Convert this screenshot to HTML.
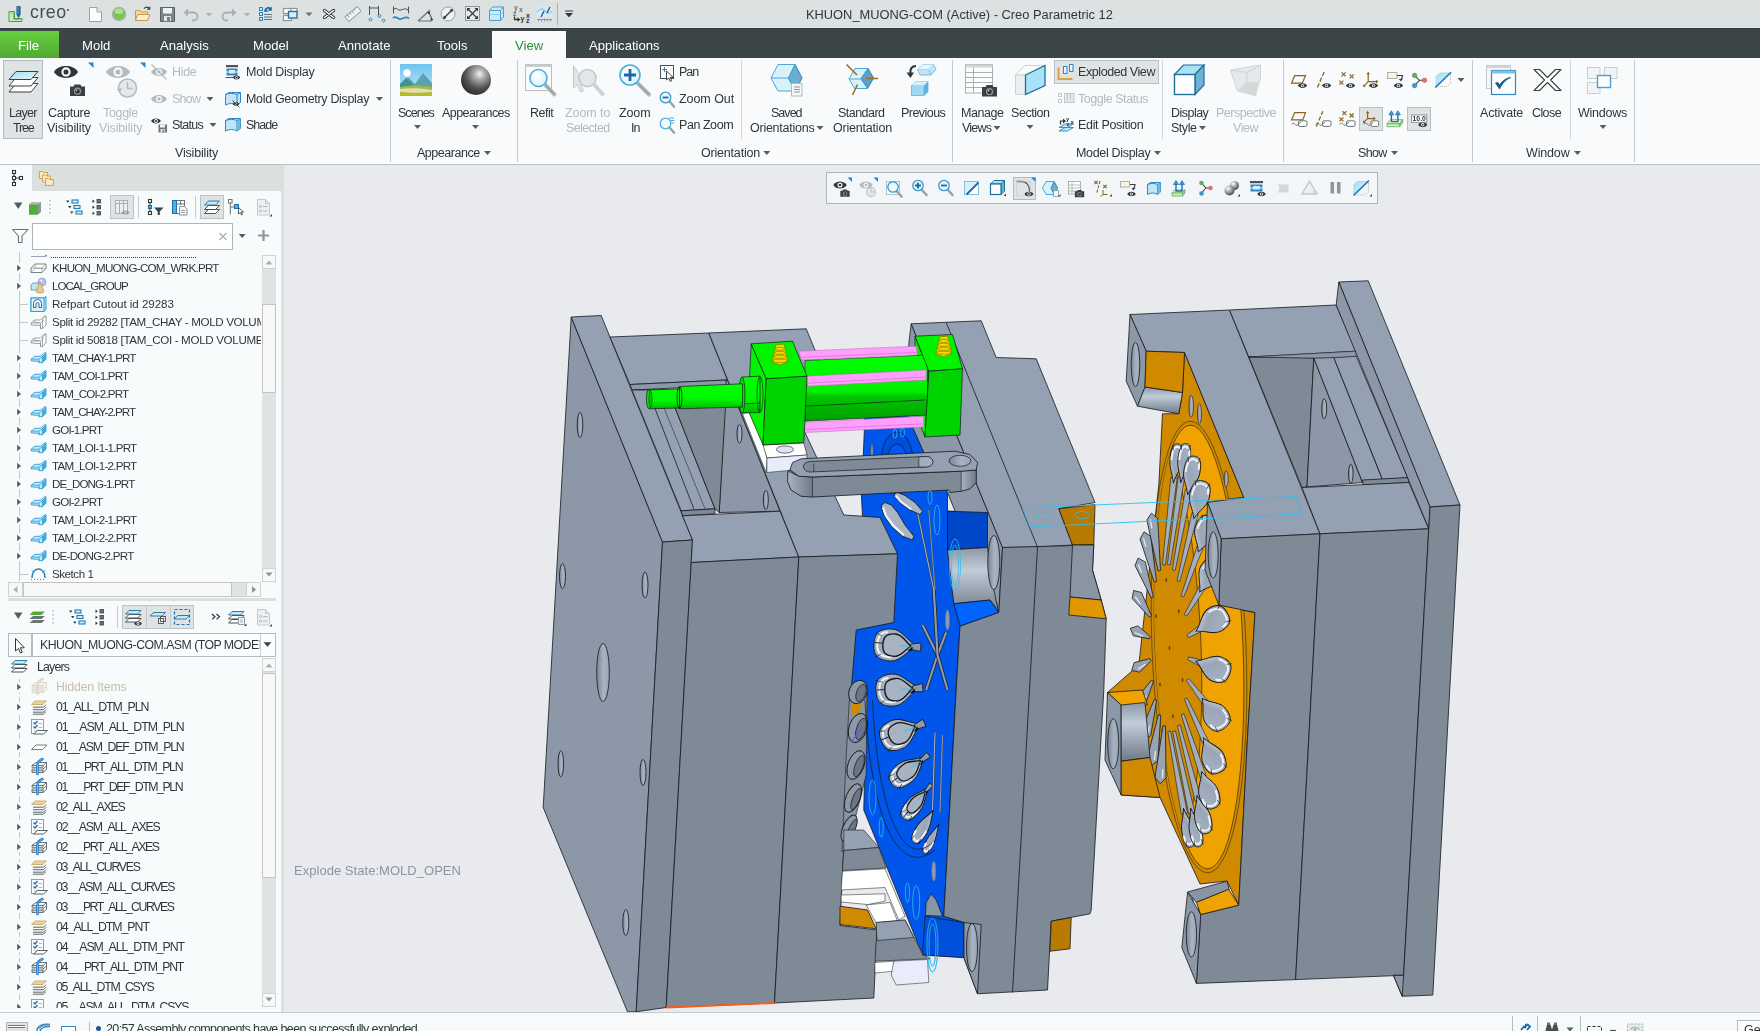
<!DOCTYPE html>
<html><head><meta charset="utf-8"><title>Creo</title>
<style>
*{box-sizing:border-box}
html,body{margin:0;padding:0}
body{width:1760px;height:1031px;overflow:hidden;position:relative;background:#e9eaee;font-family:"Liberation Sans",sans-serif;font-size:12px;color:#2f3638}
.abs{position:absolute}
#title{position:absolute;left:0;top:0;width:1760px;height:28px;background:#dce2e1;border-bottom:1px solid #e5e9e9}
#tabs{position:absolute;left:0;top:28px;width:1760px;height:30px;background:#3c4547;border-top:1px solid #2f383a}
#ribbon{position:absolute;left:0;top:58px;width:1760px;height:107px;background:#f9fafb;border-bottom:1px solid #b5c0c2;box-shadow:inset 0 -1px 0 #ffffff}
#left{position:absolute;left:0;top:165px;width:284px;height:847px;background:#f7fbfc}
#view{position:absolute;left:284px;top:165px;width:1476px;height:847px;background:#e9eaee}
#status{position:absolute;left:0;top:1012px;width:1760px;height:19px;background:#f6fafb;border-top:1px solid #c3cdd0}
.t{position:absolute;white-space:pre;line-height:1;will-change:transform}
.tb{top:39px;font-size:13.1px;color:#fff}
svg{position:absolute;overflow:visible}
</style></head>
<body>
<div id="title"></div>
<div id="tabs"></div>
<div id="ribbon"></div>
<div id="left"></div>
<div id="view"></div>
<div id="status"></div>
<svg class="abs" style="left:0;top:0" width="600" height="28" viewBox="0 0 600 28">
 <!-- creo logo -->
 <g>
  <path d="M9 11.5h5.5v7h7.5v3H9z" fill="#c9ecc0" stroke="#4f9a45" stroke-width="1"/>
  <path d="M10.5 13h3v6.5h7" fill="none" stroke="#7fc474" stroke-width="1"/>
  <path d="M16.8 6.5h3.4v8l-1.7 3-1.7-3z" fill="#1b67a8" stroke="#0f4a80" stroke-width=".6"/>
  <path d="M18 7v7" stroke="#6db3e6" stroke-width=".8"/>
 </g>
 <!-- new doc -->
 <path d="M89.5 7.5h7.5l4.5 4.5v9.5h-12z" fill="#fdfdfd" stroke="#9aa3a6"/>
 <path d="M97 7.5v4.5h4.5" fill="#e8ecee" stroke="#9aa3a6"/>
 <!-- green ball -->
 <circle cx="119" cy="14" r="6.6" fill="#7ec355" stroke="#a9b2b0" stroke-width="1.2"/>
 <ellipse cx="119" cy="11.2" rx="4.2" ry="2.6" fill="#b8e59a" opacity=".85"/>
 <!-- open folder -->
 <path d="M135.5 10.5h4l1.5 1.5h6.5v8.5h-12z" fill="#f2d9a3" stroke="#c99a45"/>
 <path d="M135.5 20.5l2.2-6h12.3l-2.5 6z" fill="#fbedc8" stroke="#c99a45"/>
 <path d="M144 8.5c1.5-1.5 3.5-1.6 5-.4" fill="none" stroke="#3a4142" stroke-width="1.3"/><path d="M150.3 6.2v3.6h-3.6z" fill="#3a4142"/>
 <!-- save -->
 <path d="M160.5 7.5h14v14h-14z" fill="#7d8689" stroke="#5a6265"/>
 <rect x="163" y="8" width="9" height="5.5" fill="#eef1f2"/>
 <rect x="163.5" y="15.5" width="8" height="6" fill="#dfe4e6" stroke="#5a6265" stroke-width=".6"/>
 <rect x="167" y="17" width="3" height="4.5" fill="#5d89b8"/>
 <!-- undo -->
 <path d="M187 12.5h6.5a4 4 0 0 1 0 8h-1.5" fill="none" stroke="#a8b0b2" stroke-width="1.8"/><path d="M183.5 12.5l4.5-4v8z" fill="#a8b0b2"/>
 <path d="M205.5 13h7l-3.5 3.5z" fill="#aeb6b8"/>
 <!-- redo -->
 <path d="M233 12.5h-6.5a4 4 0 0 0 0 8h1.5" fill="none" stroke="#a8b0b2" stroke-width="1.8"/><path d="M236.5 12.5l-4.5-4v8z" fill="#a8b0b2"/>
 <path d="M243.500 13h7l-3.5 3.500z" fill="#aeb6b8"/>
 <!-- regenerate -->
 <g fill="none" stroke="#2f87c4" stroke-width="1"><rect x="259.500" y="7.500" width="3" height="3"/><rect x="259.500" y="12.500" width="3" height="3"/><rect x="259.500" y="17.500" width="3" height="3"/></g>
 <path d="M264 14.500h8M264 17h8M264 19.500h8" stroke="#6b7375" stroke-width="1"/>
 <path d="M265 10.500c1-2.500 3.500-3.200 5.500-2" fill="none" stroke="#1b67a8" stroke-width="1.600"/><path d="M271.800 6.500v4.200h-4.200z" fill="#1b67a8"/>
 <path d="M265.500 8.500l2.800 3.200h-4.500z" fill="#1b67a8"/>
 <!-- windows -->
 <g fill="#fff" stroke="#8d9699" stroke-width="1.200"><rect x="283.500" y="8.500" width="8" height="5"/><rect x="283.500" y="15.500" width="8" height="5"/><rect x="291" y="8.500" width="6" height="4"/></g>
 <rect x="288.500" y="11.500" width="8.500" height="6.500" fill="#d9edf8" stroke="#2c6d9c" stroke-width="1.400"/>
 <path d="M305.500 12.500h7l-3.500 3.700z" fill="#6b7375"/>
 <!-- close -->
 <path d="M324.500 10.500l9 7M333.500 10.500l-9 7" stroke="#2f3638" stroke-width="3.400" stroke-linecap="round"/><path d="M324.500 10.500l9 7M333.500 10.500l-9 7" stroke="#fff" stroke-width="1.500" stroke-linecap="round"/>
 <!-- ruler -->
 <g transform="rotate(-40 353 14)"><rect x="345" y="11" width="16" height="6" fill="#f2f4f5" stroke="#9aa3a6"/><path d="M348 11v3M351 11v2M354 11v3M357 11v2" stroke="#4e8fc0" stroke-width=".9"/></g>
 <!-- dim -->
 <path d="M369.500 6v9M378.500 6v9M369.500 8h9" stroke="#4a5153" stroke-width="1" fill="none"/><circle cx="370.500" cy="19.500" r="1.400" fill="none" stroke="#2f87c4"/><circle cx="379.500" cy="16" r="1.400" fill="none" stroke="#2f87c4"/><circle cx="383.500" cy="20.500" r="1.400" fill="none" stroke="#2f87c4"/>
 <!-- wave -->
 <path d="M393.500 6.500v7M408.500 6.500v7M394 9c3-2 4 2 7 1s4-2 7 0" stroke="#4a5153" fill="none"/><path d="M393 18c3-3 5 2 8 1s5-3 8-.5" stroke="#2f87c4" stroke-width="1.800" fill="none"/>
 <!-- angle -->
 <path d="M418 21h14M418 21l12-11" stroke="#6b7375" stroke-width="1.200" fill="none"/><path d="M428.500 12.500c1.800 2 2.800 4.500 3 7" stroke="#2f3638" fill="none"/><path d="M426.800 12l3.500-.3-.8 3zM430 20.500l3.200-.2-1.500-2.800z" fill="#2f3638"/>
 <!-- circle arrow -->
 <circle cx="448" cy="14" r="7" fill="#eef1f2" stroke="#9aa3a6"/><path d="M444 18l8-8" stroke="#2f3638" stroke-width="1.200"/><path d="M443 19l.8-3.500 2.700 2.700zM453 9l-.8 3.500-2.700-2.700z" fill="#2f3638"/>
 <!-- expand -->
 <rect x="465.500" y="6.500" width="14" height="14" fill="#e6eaeb" stroke="#8d9699"/><path d="M468 9l9 9M477 9l-9 9" stroke="#2f3638" stroke-width="1.100"/><path d="M467 8h3.500l-3.500 3.500zM478 8h-3.500l3.500 3.500zM467 19h3.500l-3.500-3.500zM478 19h-3.500l3.500-3.500z" fill="#2f3638"/>
 <!-- box -->
 <path d="M489.500 10.500l3-3.500h11v10l-3 3.500h-11z" fill="#cfeaf7" stroke="#4b9fd0"/><path d="M489.500 10.500h11v10M500.500 10.500l3-3.500" fill="none" stroke="#4b9fd0"/><path d="M489.500 14.500h11l3-3" fill="none" stroke="#7fbfe2" stroke-width=".8"/>
 <!-- xyz -->
 <g font-family="Liberation Sans" font-size="6.500" font-weight="bold" fill="#6b7375"><text x="514" y="10">y</text><text x="519" y="11.500">x</text><text x="513" y="15.500" >z</text></g>
 <g font-family="Liberation Sans" font-size="7" font-weight="bold" fill="#2f3638"><text x="520.500" y="21">y</text><text x="526" y="17.500">x</text><text x="526" y="22.500">z</text></g>
 <path d="M514.500 16.500v3h4" stroke="#2f3638" stroke-width="1.300" fill="none"/><path d="M517.500 17.300l3 2.200-3 2.200z" fill="#2f3638"/>
 <!-- graph -->
 <rect x="537" y="7" width="15" height="10" fill="#d5ecf7"/><path d="M537 12c3-4 6-4 8-1s5 3 7 0" stroke="#8ec8e6" fill="none" stroke-width="1.200"/><path d="M541 17l3-6M547 13l3-6" stroke="#1b67a8" stroke-width="1.500"/><path d="M537 19.500h15M538.500 19.500v2M541.500 19.500v2M544.500 19.500v2M547.500 19.500v2M550.500 19.500v2" stroke="#7d8689" stroke-width=".8"/>
 <!-- sep -->
 <path d="M557.500 3v22" stroke="#a8b2b4"/>
 <path d="M565 10.500h8v1h-8z" fill="#2f3638"/><path d="M565 13h8l-4 4.200z" fill="#2f3638"/>
</svg>
<div class="t" style="left:30px;top:3.800px;font-size:17.800px;color:#454d4f;letter-spacing:.5px">creo</div><div class="abs" style="left:67px;top:9px;width:2px;height:2px;border-radius:1px;background:#454d4f"></div>
<div class="t" style="left:806px;top:9px;font-size:12.85px;color:#2f3638">KHUON_MUONG-COM (Active) - Creo Parametric 12</div>

<div class="abs" style="left:0;top:31px;width:59px;height:27px;background:linear-gradient(to bottom,#66d040 0%,#5cbc3a 50%,#4fa834 100%)"></div>
<div class="abs" style="left:492px;top:31px;width:74px;height:27px;background:#f9fafb"></div>
<div class="t tb" style="left:18px;color:#fff">File</div>
<div class="t tb" style="left:82px">Mold</div>
<div class="t tb" style="left:160px">Analysis</div>
<div class="t tb" style="left:253px">Model</div>
<div class="t tb" style="left:338px">Annotate</div>
<div class="t tb" style="left:437px">Tools</div>
<div class="t tb" style="left:515px;color:#2f8a3d">View</div>
<div class="t tb" style="left:589px">Applications</div>

<div class="abs" style="left:3px;top:60px;width:40px;height:79px;background:#dfe3e4;border:1px solid #b3babc"></div>
<div class="abs" style="left:1054px;top:60px;width:105px;height:24px;background:#dfe3e4;border:1px solid #b9c0c2"></div>
<div class="abs" style="left:1359px;top:107px;width:24px;height:24px;background:#dfe3e4;border:1px solid #b9c0c2"></div>
<div class="abs" style="left:1407px;top:107px;width:24px;height:24px;background:#dfe3e4;border:1px solid #b9c0c2"></div>
<div class="abs" style="left:390px;top:60px;width:1px;height:102px;background:#c3cacc"></div>
<div class="abs" style="left:517px;top:60px;width:1px;height:102px;background:#c3cacc"></div>
<div class="abs" style="left:952px;top:60px;width:1px;height:102px;background:#c3cacc"></div>
<div class="abs" style="left:1283px;top:60px;width:1px;height:102px;background:#c3cacc"></div>
<div class="abs" style="left:1472px;top:60px;width:1px;height:102px;background:#c3cacc"></div>
<div class="abs" style="left:1634px;top:60px;width:1px;height:102px;background:#c3cacc"></div>
<div class="abs" style="left:741px;top:60px;width:1px;height:79px;background:#cfd5d7"></div>
<div class="abs" style="left:1162px;top:60px;width:1px;height:79px;background:#cfd5d7"></div>
<div class="abs" style="left:1570px;top:60px;width:1px;height:79px;background:#cfd5d7"></div>
<div class="t" style="left:9.3px;top:106.7px;font-size:12.5px;letter-spacing:-0.714px;">Layer</div>

<div class="t" style="left:13.0px;top:121.6px;font-size:12.5px;letter-spacing:-1.160px;">Tree</div>

<div class="t" style="left:48.2px;top:106.7px;font-size:12.5px;letter-spacing:-0.353px;">Capture</div>

<div class="t" style="left:47.0px;top:121.6px;font-size:12.5px;letter-spacing:-0.092px;">Visibility</div>

<div class="t" style="left:103.4px;top:106.7px;font-size:12.5px;letter-spacing:-0.339px;color:#b3babc;">Toggle</div>

<div class="t" style="left:99.3px;top:121.6px;font-size:12.5px;letter-spacing:-0.152px;color:#b3babc;">Visibility</div>

<div class="t" style="left:171.6px;top:65.9px;font-size:12.5px;letter-spacing:-0.327px;color:#b3babc;">Hide</div>

<div class="t" style="left:171.6px;top:92.7px;font-size:12.5px;letter-spacing:-0.717px;color:#b3babc;">Show</div>

<div class="t" style="left:171.6px;top:118.7px;font-size:12.5px;letter-spacing:-0.723px;">Status</div>

<div class="t" style="left:245.5px;top:65.9px;font-size:12.5px;letter-spacing:-0.254px;">Mold Display</div>

<div class="t" style="left:245.5px;top:92.7px;font-size:12.5px;letter-spacing:-0.324px;">Mold Geometry Display</div>

<div class="t" style="left:245.5px;top:118.7px;font-size:12.5px;letter-spacing:-0.969px;">Shade</div>

<div class="t" style="left:174.5px;top:146.7px;font-size:12.5px;letter-spacing:-0.172px;">Visibility</div>

<div class="t" style="left:398.0px;top:106.7px;font-size:12.5px;letter-spacing:-0.966px;">Scenes</div>

<div class="t" style="left:442.3px;top:106.7px;font-size:12.5px;letter-spacing:-0.542px;">Appearances</div>

<div class="t" style="left:417.3px;top:146.7px;font-size:12.5px;letter-spacing:-0.471px;">Appearance</div>

<div class="t" style="left:529.5px;top:106.7px;font-size:12.5px;letter-spacing:-0.500px;">Refit</div>

<div class="t" style="left:565.2px;top:106.7px;font-size:12.5px;letter-spacing:-0.079px;color:#b3babc;">Zoom to</div>

<div class="t" style="left:566.0px;top:121.6px;font-size:12.5px;letter-spacing:-0.643px;color:#b3babc;">Selected</div>

<div class="t" style="left:619.0px;top:106.7px;font-size:12.5px;letter-spacing:-0.113px;">Zoom</div>

<div class="t" style="left:630.5px;top:121.6px;font-size:12.5px;letter-spacing:-0.962px;">In</div>

<div class="t" style="left:679.3px;top:65.9px;font-size:12.5px;letter-spacing:-0.980px;">Pan</div>

<div class="t" style="left:678.9px;top:92.7px;font-size:12.5px;letter-spacing:-0.059px;">Zoom Out</div>

<div class="t" style="left:679.3px;top:118.7px;font-size:12.5px;letter-spacing:-0.446px;">Pan Zoom</div>

<div class="t" style="left:700.5px;top:146.7px;font-size:12.5px;letter-spacing:-0.195px;">Orientation</div>

<div class="t" style="left:771.0px;top:106.7px;font-size:12.5px;letter-spacing:-0.969px;">Saved</div>

<div class="t" style="left:749.5px;top:121.6px;font-size:12.5px;letter-spacing:-0.250px;">Orientations</div>

<div class="t" style="left:838.0px;top:106.7px;font-size:12.5px;letter-spacing:-0.529px;">Standard</div>

<div class="t" style="left:832.5px;top:121.6px;font-size:12.5px;letter-spacing:-0.204px;">Orientation</div>

<div class="t" style="left:900.5px;top:106.7px;font-size:12.5px;letter-spacing:-0.542px;">Previous</div>

<div class="t" style="left:960.5px;top:106.7px;font-size:12.5px;letter-spacing:-0.445px;">Manage</div>

<div class="t" style="left:961.6px;top:121.6px;font-size:12.5px;letter-spacing:-0.804px;">Views</div>

<div class="t" style="left:1011.0px;top:106.7px;font-size:12.5px;letter-spacing:-0.456px;">Section</div>

<div class="t" style="left:1078.0px;top:65.9px;font-size:12.5px;letter-spacing:-0.420px;">Exploded View</div>

<div class="t" style="left:1078.0px;top:92.7px;font-size:12.5px;letter-spacing:-0.442px;color:#b3babc;">Toggle Status</div>

<div class="t" style="left:1078.0px;top:118.7px;font-size:12.5px;letter-spacing:-0.314px;">Edit Position</div>

<div class="t" style="left:1170.7px;top:106.7px;font-size:12.5px;letter-spacing:-0.526px;">Display</div>

<div class="t" style="left:1171.4px;top:121.6px;font-size:12.5px;letter-spacing:-0.478px;">Style</div>

<div class="t" style="left:1216.4px;top:106.7px;font-size:12.5px;letter-spacing:-0.483px;color:#b3babc;">Perspective</div>

<div class="t" style="left:1233.0px;top:121.6px;font-size:12.5px;letter-spacing:-0.467px;color:#b3babc;">View</div>

<div class="t" style="left:1075.7px;top:146.7px;font-size:12.5px;letter-spacing:-0.323px;">Model Display</div>

<div class="t" style="left:1358.0px;top:146.7px;font-size:12.5px;letter-spacing:-0.667px;">Show</div>

<div class="t" style="left:1480.0px;top:106.7px;font-size:12.5px;letter-spacing:-0.183px;">Activate</div>

<div class="t" style="left:1532.0px;top:106.7px;font-size:12.5px;letter-spacing:-0.592px;">Close</div>

<div class="t" style="left:1578.0px;top:106.7px;font-size:12.5px;letter-spacing:-0.244px;">Windows</div>

<div class="t" style="left:1526.0px;top:146.7px;font-size:12.5px;letter-spacing:-0.160px;">Window</div>
<svg style="left:0;top:0" width="1760" height="170" viewBox="0 0 1760 170">
<defs>
<linearGradient id="gcy" x1="0" y1="0" x2="1" y2="1"><stop offset="0" stop-color="#9fdcf5"/><stop offset="1" stop-color="#eaf8fd"/></linearGradient>
<radialGradient id="gsph" cx=".62" cy=".3" r=".75"><stop offset="0" stop-color="#f2f2f2"/><stop offset=".25" stop-color="#a9a9a9"/><stop offset=".65" stop-color="#4f4f4f"/><stop offset="1" stop-color="#2b2b2b"/></radialGradient>
<linearGradient id="gsky" x1="0" y1="0" x2="0" y2="1"><stop offset="0" stop-color="#6fc3ee"/><stop offset="1" stop-color="#c8e9f8"/></linearGradient>
<radialGradient id="glens" cx=".4" cy=".35" r=".8"><stop offset="0" stop-color="#ffffff"/><stop offset="1" stop-color="#d4eefa"/></radialGradient>
<g id="eye"><path d="M-8 0C-5-5.300 5-5.300 8 0C5 5.300-5 5.300-8 0z"/><circle r="3.100" fill="#f9fafb"/><circle r="1.700"/></g>
<g id="seye"><path d="M-4.600 0C-2.800-3.200 2.800-3.200 4.600 0C2.800 3.200-2.800 3.200-4.600 0z" fill="#2f3638"/><circle r="1.700" fill="#f9fafb"/><circle r=".9" fill="#2f3638"/></g>
<g id="cam"><path d="M-7.500-3.500h3.500l1.200-2h5.600l1.200 2h3.500v9.500h-15z" fill="#3a3f41"/><circle cy="1.200" r="3.600" fill="#8d9699"/><circle cy="1.200" r="2.300" fill="#2a2e30"/><circle cx="-.8" cy=".4" r=".8" fill="#c9d0d2"/></g>
</defs>
<path d="M206.5 97.0h7l-3.5 4z" fill="#555d5f"/>
<path d="M209.5 123.0h7l-3.5 4z" fill="#555d5f"/>
<path d="M376.0 97.0h7l-3.5 4z" fill="#555d5f"/>
<path d="M414.0 125.0h7l-3.5 4z" fill="#555d5f"/>
<path d="M472.0 125.0h7l-3.5 4z" fill="#555d5f"/>
<path d="M484.0 151.0h7l-3.5 4z" fill="#555d5f"/>
<path d="M763.3 151.0h7l-3.5 4z" fill="#555d5f"/>
<path d="M816.5 126.0h7l-3.5 4z" fill="#555d5f"/>
<path d="M993.5 126.0h7l-3.5 4z" fill="#555d5f"/>
<path d="M1026.5 125.0h7l-3.5 4z" fill="#555d5f"/>
<path d="M1199.0 126.0h7l-3.5 4z" fill="#555d5f"/>
<path d="M1154.0 151.0h7l-3.5 4z" fill="#555d5f"/>
<path d="M1391.0 151.0h7l-3.5 4z" fill="#555d5f"/>
<path d="M1457.5 78.0h7l-3.5 4z" fill="#555d5f"/>
<path d="M1599.5 125.0h7l-3.5 4z" fill="#555d5f"/>
<path d="M1574.0 151.0h7l-3.5 4z" fill="#555d5f"/>
<path d="M9 92l7-8.500h22l-7 8.500z" fill="#fff" stroke="#3a4143" stroke-width="1"/>
<path d="M9 86l7-8.500h22l-7 8.500z" fill="#fff" stroke="#3a4143" stroke-width="1"/>
<path d="M9 79.500l7-8h22l-7 8z" fill="url(#gcy)" stroke="#3a4143" stroke-width="1"/>
<g transform="translate(66,72) scale(1.5,1.500)" fill="#2f3638"><use href="#eye"/></g>
<g transform="translate(77.5,90)"><use href="#cam"/></g>
<path d="M88 62.500h5.500v5.500z" fill="#1e88d8"/>
<g transform="translate(118,72) scale(1.5,1.500)" fill="#b4bbbd"><use href="#eye"/></g>
<circle cx="127.500" cy="88" r="9" fill="#e4e8e9" stroke="#b4bbbd" stroke-width="1.500"/><path d="M127.500 82v6.500h5" stroke="#b4bbbd" stroke-width="1.400" fill="none"/><path d="M116.500 89l3.500 3.500 2-4.500z" fill="#b4bbbd"/>
<path d="M140 62.500h5.500v5.500z" fill="#1e88d8"/>
<g transform="translate(159,72)" fill="#b4bbbd"><use href="#eye"/></g><path d="M151.500 64.500l15 15" stroke="#b4bbbd" stroke-width="1.200"/>
<g transform="translate(159,99)" fill="#b4bbbd"><use href="#eye"/></g>
<g transform="translate(156,121) scale(.62)" fill="#2f3638"><use href="#eye"/></g>
<path d="M158.500 124.500h8.500v8h-8.500z" fill="#6e777a"/><rect x="160" y="124.500" width="5" height="3" fill="#f1f4f5"/><rect x="160.500" y="129" width="4.500" height="3.500" fill="#dfe4e6"/><rect x="162.500" y="129.800" width="1.600" height="2.700" fill="#4e7fb5"/>
<rect x="226" y="65" width="12" height="2.200" fill="#4a5254"/><rect x="226.500" y="68.500" width="11" height="3" fill="#2f87c4"/><rect x="226.500" y="72.500" width="11" height="3" fill="#2f87c4"/><rect x="229" y="70" width="6" height="3.500" fill="#d7edf9"/><path d="M225.500 77.500h8" stroke="#4a5254"/>
<g transform="translate(236.500,77.500) scale(.8)"><use href="#seye"/></g>
<path d="M225.500 94.500l3.500-2h11.500v10l-3.500 2.500c-3.500-2-7.500-2-11.500 0z" fill="#bfe5f7" stroke="#2f87c4" stroke-width="1"/><path d="M225.500 94.500c4-1.500 8-1.500 11.500 0v10.500M237 94.500l3.500-2" fill="none" stroke="#2f87c4"/>
<g transform="translate(236,104) scale(.75)"><use href="#seye"/></g><path d="M232.500 100.500l7 7" stroke="#2f3638" stroke-width=".9"/>
<path d="M225.500 120.500l3.500-2h11.500v10l-3.500 2.500c-3.500-2-7.500-2-11.500 0z" fill="#bfe5f7" stroke="#2f87c4" stroke-width="1"/><path d="M225.500 120.500c4-1.500 8-1.500 11.500 0v10.500M237 120.500l3.500-2" fill="none" stroke="#2f87c4"/><path d="M237 120.700l3.400-2v9.700l-3.400 2.300z" fill="#6fb9e0"/>
<rect x="400" y="64" width="32" height="32" fill="url(#gsky)"/><circle cx="407" cy="73" r="3.800" fill="#fff" opacity=".95"/><path d="M400 86l8-9 7 7 8-11 9 10v6h-32z" fill="#5ba3aa"/><path d="M400 84l6-6 6 6 5 5h-17z" fill="#3f8f95"/><path d="M400 87c10-2 22-2 32 0v9h-32z" fill="#9fb84a"/><path d="M400 89c10-1.500 22-1 32 1v2c-10 2-22 2-32 0z" fill="#e3dfb5"/><path d="M400 92c10 1 22 1 32 0v4h-32z" fill="#b9b92c"/>
<circle cx="476" cy="80" r="15" fill="url(#gsph)"/>
<rect x="525.500" y="64.500" width="26" height="26" fill="#fbfcfc" stroke="#b7bec0"/><rect x="525.500" y="64.500" width="26" height="2.500" fill="#c9cfd1"/>
<path d="M545.500 85l9 9.500" stroke="#b9bfc1" stroke-width="4" stroke-linecap="round"/><path d="M545.500 85l9 9.500" stroke="#8f989b" stroke-width="1.200"/><circle cx="538.500" cy="78" r="8.500" fill="url(#glens)" stroke="#4ab0dc" stroke-width="1.600"/>
<path d="M573.500 66v22l4-3.500 3 7.500 3-1-3-7.500h5.500z" fill="#e3e6e7" stroke="#c3c9cb"/>
<path d="M594.500 85l8 9" stroke="#cdd2d4" stroke-width="4" stroke-linecap="round"/><circle cx="587.500" cy="78" r="8.500" fill="#e4e7e8" stroke="#c3c9cb" stroke-width="1.600"/>
<path d="M638 83.500l11 11" stroke="#b9bfc1" stroke-width="4.200" stroke-linecap="round"/><path d="M638 83.500l11 11" stroke="#8f989b" stroke-width="1.200"/><circle cx="630" cy="75" r="10" fill="url(#glens)" stroke="#4ab0dc" stroke-width="1.600"/><path d="M624 75h12M630 69v12" stroke="#1b67a8" stroke-width="2.800"/>
<rect x="660.500" y="65.500" width="13" height="13" fill="#fdfdfd" stroke="#4a5254"/><path d="M664.500 67v5M662 69.500h5" stroke="#2f87c4" stroke-width="1.100"/><path d="M666.500 71v9l2.200-2 1.500 3.500 1.500-.7-1.500-3.400h3z" fill="#fff" stroke="#2f3638" stroke-width=".9"/>
<path d="M669.500 101.500l4.500 5" stroke="#9aa3a6" stroke-width="2.600" stroke-linecap="round"/><circle cx="665.500" cy="97.500" r="5.300" fill="#eef8fd" stroke="#2f9bd0" stroke-width="1.300"/><path d="M662.500 97.500h6" stroke="#1b67a8" stroke-width="1.800"/>
<path d="M669.500 127.500l4.500 5" stroke="#9aa3a6" stroke-width="2.600" stroke-linecap="round"/><circle cx="665.500" cy="123.500" r="5.300" fill="#eef8fd" stroke="#4ab0dc" stroke-width="1.300"/><path d="M669 118h5M670.500 120.500h4M671 123h3" stroke="#4ab0dc" stroke-width="1"/>
<path d="M771 78l7-13.500h17l7 13.500-7 13h-17z" fill="#d8f1fb" stroke="#4aa8d8" stroke-width="1"/><path d="M795 64.500l7 13.500-7 13-6.500-13z" fill="#6aaed0" stroke="#3d8fc0"/><path d="M771 78h17.500l6.500-13.500M788.500 78l6.500 13" fill="none" stroke="#4aa8d8"/>
<rect x="791.500" y="83.500" width="10.500" height="12.500" fill="#f4f6f7" stroke="#b3babc"/><path d="M794 87h6M794 89.500h6M794 92h6" stroke="#8d9699" stroke-width="1"/>
<path d="M849 79l6-10.500h13l5.500 9.500-6 10.500h-13z" fill="#d8f1fb" stroke="#4aa8d8"/><path d="M861 78.500l7-10 5.500 9.500-6 10.500z" fill="#5f9fc0" stroke="#3d8fc0"/><path d="M849 79h12l7-10.500M861 79l6.500 9.500" fill="none" stroke="#4aa8d8"/>
<path d="M846.500 64.500l10.500 10.500M866 78.500h12M857.500 84.500l-5 10.500" stroke="#9a6a1e" stroke-width="1.500"/>
<path d="M917.500 69.500l5-5h11l2.500 5-5 5.500h-11z" fill="#bfe5f7" stroke="#6fc0e8"/><path d="M917.500 69.500h11l5-5M928.500 69.500l2.500 5.500" stroke="#6fc0e8" fill="none"/><path d="M917.500 69.500l5-5h11l-5 5z" fill="#e6f6fd"/>
<path d="M911.500 85.500l4-4h12.500v10l-4 4h-12.500z" fill="#9fd8f3" stroke="#6fc0e8"/><path d="M911.500 85.500h12.500v10M924 85.500l4-4" stroke="#6fc0e8" fill="none"/><path d="M911.500 85.500l4-4h12.500l-4 4z" fill="#d8f1fb"/><path d="M924 85.500l4-4v10l-4 4z" fill="#5fb0dc"/>
<path d="M916 66c-4 0-6.500 3-5.500 7.500" fill="none" stroke="#2f3638" stroke-width="2.200"/><path d="M906.500 72.500h7.500l-3.500 5.500z" fill="#2f3638"/>
<rect x="965.500" y="64.500" width="27" height="28.500" fill="#fcfdfd" stroke="#a8b0b2"/><rect x="965.500" y="64.500" width="27" height="3" fill="#d0d5d7"/><path d="M965.500 72.500h27M965.500 77.500h27M965.500 82.500h27M965.500 87.500h27M973.500 67.500v25.500" stroke="#a8b0b2" stroke-width="1"/>
<g transform="translate(989.500,90.500)"><use href="#cam"/></g>
<path d="M1015.500 75l9-9.500h20.500l-19.500 9.500z" fill="#fbfcfc" stroke="#c3c9cb" stroke-width=".8"/><path d="M1015.500 75h10v19.500h-10z" fill="#eceeef" stroke="#c3c9cb" stroke-width=".8"/><path d="M1025.500 75l19.500-9.500v20l-19.500 9z" fill="#a8e2f7" stroke="#1f6f9c" stroke-width="1.300"/>
<path d="M1058.500 67.500v11.500h14" fill="none" stroke="#d9a33a" stroke-width="2"/><rect x="1063.500" y="66.500" width="3.500" height="7" fill="#eaf6fc" stroke="#2f87c4"/><rect x="1069.500" y="64.500" width="3.500" height="7" fill="#eaf6fc" stroke="#2f87c4"/>
<g fill="none" stroke="#c3c9cb" stroke-width="1"><rect x="1058.500" y="93.500" width="3" height="3"/><rect x="1058.500" y="99.500" width="3" height="3"/></g><rect x="1064.500" y="93.500" width="9.500" height="9" fill="#e4e8e9" stroke="#c3c9cb"/><path d="M1067.500 93.500v7M1070.500 93.500v7" stroke="#c3c9cb"/>
<path d="M1059 131l6-3.500h8.500l-6 3.500z" fill="#bfe5f7" stroke="#2f87c4" stroke-width=".9"/><path d="M1059 127.500l6-3.500h8.500l-6 3.500z" fill="#bfe5f7" stroke="#2f87c4" stroke-width=".9"/><path d="M1060.500 124.500v-3.500h3.500" fill="none" stroke="#2f3638" stroke-width="1.200"/><path d="M1063 118.500l3 2.500-3 2.500z" fill="#2f3638"/>
<g font-family="Liberation Sans" font-size="6" font-weight="bold" fill="#2f3638"><text x="1066" y="121">y</text><text x="1070.500" y="123.500">x</text><text x="1066.500" y="126">z</text></g>
<path d="M1174.500 74.500l9-9.500h20.500l-9 9.500z" fill="#a8e2f7" stroke="#1f6f9c" stroke-width="1.200"/><path d="M1195 74.500l9-9.500v20l-9 9.500z" fill="#6fb2d2" stroke="#1f6f9c" stroke-width="1.200"/><rect x="1174.500" y="74.500" width="20.500" height="20" fill="#fff" stroke="#1f6f9c" stroke-width="1.400"/>
<path d="M1230.500 70l7 21 18 4.500 5-18v-12.500z" fill="#e6e8e9" stroke="#d0d4d6"/><path d="M1230.500 70l17 2.500 13-7.500M1247.500 72.500l-3 20" fill="none" stroke="#d0d4d6"/><path d="M1238 90l9-8h12l-4 13.500z" fill="#d5d8d9"/>
<rect x="1486.500" y="65.500" width="24" height="23" fill="#f4f6f7" stroke="#c3c9cb"/><rect x="1486.500" y="65.500" width="24" height="2.500" fill="#d0d5d7"/><rect x="1491.500" y="70.500" width="24" height="24" fill="#fbfcfc" stroke="#2f87c4" stroke-width="1.200"/><rect x="1491.500" y="70.500" width="24" height="3" fill="#7fc0e6"/><path d="M1495.500 83l4 6c3-6 6-9 11-11.500-4 .5-8 3-11 7.500l-1.500-2.500z" fill="#155a8a" stroke="#155a8a" stroke-width=".8" stroke-linejoin="round"/>
<path d="M1534 69.500h5.500l8 8 8-8h5.500l-10.500 10.500 10.500 10.500h-5.500l-8-8-8 8h-5.500l10.500-10.500z" fill="#fff" stroke="#3a4143" stroke-width="1.100" stroke-linejoin="round"/>
<g fill="#f1f3f4" stroke="#c9cfd1" stroke-width="1"><rect x="1587.500" y="67.500" width="12.500" height="11"/><rect x="1587.500" y="82.500" width="12.500" height="11"/><rect x="1604.500" y="67.500" width="12.500" height="11"/></g><rect x="1597.500" y="75.500" width="13" height="12" fill="#fafdfe" stroke="#4f9fd0" stroke-width="1.400"/>
<path d="M1291.500 83.200l3.200-7.500h10.800l-3.200 7.500z" fill="none" stroke="#8a6420" stroke-width="1.200"/><g transform="translate(1302.5,85.6) scale(1.0)"><use href="#seye"/></g>
<path d="M1317.400 87.500l6.700-15.400" stroke="#8a6420" stroke-width="1.300" stroke-dasharray="4.500 1.800" fill="none"/><g transform="translate(1326.6,85.6) scale(1.0)"><use href="#seye"/></g>
<path d="M1341.6 72.4l4 4M1345.6 72.4l-4 4" stroke="#8a6420" stroke-width="1.200" fill="none"/><path d="M1349.6 74.4l4 4M1353.6 74.4l-4 4" stroke="#8a6420" stroke-width="1.200" fill="none"/><path d="M1339.4 80.7l4 4M1343.4 80.7l-4 4" stroke="#8a6420" stroke-width="1.200" fill="none"/><g transform="translate(1350.5,85.6) scale(1.0)"><use href="#seye"/></g>
<path d="M1368.200 73v8.600h8.500M1368.200 81.600l-4.500 4.800" stroke="#8a6420" stroke-width="1.200" fill="none"/><path d="M1366.400 74.200l1.800-2.400 1.800 2.400zM1376 79.800l2.400 1.800-2.400 1.800zM1363 87.200l.6-3 2.200 2z" fill="#8a6420"/><g transform="translate(1373.5,85.6) scale(1.0)"><use href="#seye"/></g>
<rect x="1387.500" y="72.500" width="9.400" height="6" fill="#fdf3d9" stroke="#a8b0b2"/><path d="M1397 75.500h5.500l-1.200 4.500" fill="none" stroke="#3a4143" stroke-width="1.100"/><path d="M1398.800 79l4.200-.4-2 3z" fill="#3a4143"/><g transform="translate(1398.4,85.6) scale(1.0)"><use href="#seye"/></g>
<path d="M1414.600 75.400l4.800 4.900h5M1419.400 80.300l-4.800 5.300" stroke="#3a4143" stroke-width="1.100" fill="none"/><circle cx="1414.600" cy="75.400" r="2.300" fill="#6aa86a" stroke="#4f8f4f" stroke-width=".5"/><circle cx="1424.500" cy="80.300" r="2.300" fill="#e07070" stroke="#c05050" stroke-width=".5"/><circle cx="1414.600" cy="85.600" r="2.300" fill="#4a94c4" stroke="#2f78a8" stroke-width=".5"/>
<path d="M1436.200 76.200l3.800-3.200h10.800l-14.600 13.600z" fill="url(#gcy)" stroke="#8ecbe8" stroke-width=".6"/><path d="M1450.500 74.500v9l-3.500 3h-9" fill="none" stroke="#a8b0b2" stroke-width="1" stroke-dasharray="1 1.200"/><path d="M1435.300 87.500l15.700-15.300" stroke="#1f6fb0" stroke-width="1.500"/>
<path d="M1291.500 119.900l3.200-7.300h10.800l-2.700 7.300z" fill="none" stroke="#8a6420" stroke-width="1.200"/><rect x="1298.5" y="120.8" width="8.4" height="5.6" rx="1.200" fill="#fff" stroke="#6b7375" stroke-width="1"/><path d="M1291.5 124.3c1.500-1.500 2.500-1.500 3.500 0s2.500 1.500 4-0.500l2-2" fill="none" stroke="#6b7375" stroke-width="1"/>
<path d="M1316.300 126.400l6.500-15.100" stroke="#8a6420" stroke-width="1.300" stroke-dasharray="4.500 1.800" fill="none"/><rect x="1322.6" y="120.8" width="8.3" height="5.6" rx="1.200" fill="#fff" stroke="#6b7375" stroke-width="1"/><path d="M1315.6 124.3c1.500-1.500 2.500-1.500 3.500 0s2.500 1.500 4-0.500l2-2" fill="none" stroke="#6b7375" stroke-width="1"/>
<path d="M1342.4 111.1l4 4M1346.4 111.1l-4 4" stroke="#8a6420" stroke-width="1.200" fill="none"/><path d="M1349.6 113.5l4 4M1353.6 113.5l-4 4" stroke="#8a6420" stroke-width="1.200" fill="none"/><path d="M1339.4 117.4l4 4M1343.4 117.4l-4 4" stroke="#8a6420" stroke-width="1.200" fill="none"/><rect x="1346.6" y="120.8" width="8.4" height="5.6" rx="1.200" fill="#fff" stroke="#6b7375" stroke-width="1"/><path d="M1339.6 124.3c1.500-1.500 2.500-1.500 3.500 0s2.500 1.500 4-0.500l2-2" fill="none" stroke="#6b7375" stroke-width="1"/>
<path d="M1367.600 112v6.600h6.500M1367.600 118.600l-4 3.800" stroke="#8a6420" stroke-width="1.200" fill="none"/><path d="M1365.800 113.200l1.800-2.400 1.800 2.400zM1373.400 116.800l2.400 1.800-2.400 1.800zM1362.800 123.200l.6-3 2.200 2z" fill="#8a6420"/><rect x="1370.9" y="120.8" width="7.8" height="5.6" rx="1.200" fill="#fff" stroke="#6b7375" stroke-width="1"/><path d="M1363.9 124.3c1.500-1.500 2.500-1.500 3.500 0s2.500 1.500 4-0.500l2-2" fill="none" stroke="#6b7375" stroke-width="1"/>
<path d="M1387 123.700l3.200-4h12.500l-3 4z" fill="#e2f8dc" stroke="#5fb04f" stroke-width=".8"/><path d="M1387 123.700h12.700v3h-12.700z" fill="#c8f0c0" stroke="#5fb04f" stroke-width=".8"/><path d="M1399.700 123.700l3-4v3l-3 4z" fill="#9ed890" stroke="#5fb04f" stroke-width=".8"/><path d="M1391.400 114v7.600h6.500v-7.600" fill="none" stroke="#1f6fb0" stroke-width="1.400"/><path d="M1388.900 114.800l2.500-4 2.500 4zM1395.400 114.800l2.500-4 2.500 4z" fill="#2f9bdc" stroke="#1f6fb0" stroke-width=".7"/>
<rect x="1411.600" y="114.900" width="15.100" height="7.500" fill="#fff" stroke="#8d9699" stroke-width="1"/><text x="1412.600" y="121.300" font-family="Liberation Sans" font-size="6.800" font-weight="bold" fill="#2f3638" textLength="13.200" lengthAdjust="spacingAndGlyphs">10.0</text><g transform="translate(1422.7,124.8) scale(1.0)"><use href="#seye"/></g>
</svg>
<div class="abs" style="left:32px;top:165px;width:252px;height:26px;background:#dbe0df"></div>
<div class="abs" style="left:281px;top:191px;width:3px;height:821px;background:#dae0e0"></div>
<div class="abs" style="left:110px;top:195px;width:24px;height:24px;background:#dfe3e4;border:1px solid #bcc3c5"></div>
<div class="abs" style="left:200px;top:195px;width:24px;height:24px;background:#dfe3e4;border:1px solid #bcc3c5"></div>
<div class="abs" style="left:138px;top:196px;width:1px;height:22px;background:#c3cacc"></div>
<div class="abs" style="left:195px;top:196px;width:1px;height:22px;background:#c3cacc"></div>
<div class="abs" style="left:32px;top:223px;width:201px;height:27px;background:#fff;border:1px solid #aab6b9"></div>
<div class="abs" style="left:0;top:252px;width:261px;height:329px;overflow:hidden"><div class="abs" style="left:0;top:-252px">
<div class="t" style="left:52.4px;top:262.4px;font-size:11.6px;letter-spacing:-0.724px;">KHUON_MUONG-COM_WRK.PRT</div>

<div class="t" style="left:52.4px;top:280.4px;font-size:11.6px;letter-spacing:-1.021px;">LOCAL_GROUP</div>

<div class="t" style="left:52.4px;top:298.4px;font-size:11.6px;letter-spacing:-0.055px;">Refpart Cutout id 29283</div>

<div class="t" style="left:52.4px;top:316.4px;font-size:11.6px;letter-spacing:-0.336px;">Split id 29282 [TAM_CHAY - MOLD VOLUME_1]</div>

<div class="t" style="left:52.4px;top:334.4px;font-size:11.6px;letter-spacing:-0.329px;">Split id 50818 [TAM_COI - MOLD VOLUME_2]</div>

<div class="t" style="left:52.4px;top:352.4px;font-size:11.6px;letter-spacing:-0.958px;">TAM_CHAY-1.PRT</div>

<div class="t" style="left:52.4px;top:370.4px;font-size:11.6px;letter-spacing:-0.833px;">TAM_COI-1.PRT</div>

<div class="t" style="left:52.4px;top:388.4px;font-size:11.6px;letter-spacing:-0.833px;">TAM_COI-2.PRT</div>

<div class="t" style="left:52.4px;top:406.4px;font-size:11.6px;letter-spacing:-0.979px;">TAM_CHAY-2.PRT</div>

<div class="t" style="left:52.4px;top:424.4px;font-size:11.6px;letter-spacing:-0.822px;">GOI-1.PRT</div>

<div class="t" style="left:52.4px;top:442.4px;font-size:11.6px;letter-spacing:-0.741px;">TAM_LOI-1-1.PRT</div>

<div class="t" style="left:52.4px;top:460.4px;font-size:11.6px;letter-spacing:-0.741px;">TAM_LOI-1-2.PRT</div>

<div class="t" style="left:52.4px;top:478.4px;font-size:11.6px;letter-spacing:-0.884px;">DE_DONG-1.PRT</div>

<div class="t" style="left:52.4px;top:496.4px;font-size:11.6px;letter-spacing:-0.822px;">GOI-2.PRT</div>

<div class="t" style="left:52.4px;top:514.4px;font-size:11.6px;letter-spacing:-0.741px;">TAM_LOI-2-1.PRT</div>

<div class="t" style="left:52.4px;top:532.4px;font-size:11.6px;letter-spacing:-0.741px;">TAM_LOI-2-2.PRT</div>

<div class="t" style="left:52.4px;top:550.4px;font-size:11.6px;letter-spacing:-0.754px;">DE-DONG-2.PRT</div>

<div class="t" style="left:52.4px;top:568.4px;font-size:11.6px;letter-spacing:-0.467px;">Sketch 1</div>

</div></div>
<div class="abs" style="left:262px;top:255px;width:14px;height:327px;background:#e1e2e4"></div><div class="abs" style="left:262px;top:255px;width:14px;height:14px;background:#f8f8f9;border:1px solid #d0d2d4"></div><div class="abs" style="left:262px;top:568px;width:14px;height:14px;background:#f8f8f9;border:1px solid #d0d2d4"></div><div class="abs" style="left:262px;top:304px;width:14px;height:89px;background:#f8f8f9;border:1px solid #c3c4c6"></div>
<div class="abs" style="left:8px;top:582px;width:252px;height:15px;background:#e1e2e4;border:1px solid #c9d0d2"></div>
<div class="abs" style="left:8px;top:582px;width:15px;height:15px;background:#f8f8f9;border:1px solid #d0d2d4"></div>
<div class="abs" style="left:246px;top:582px;width:15px;height:15px;background:#f8f8f9;border:1px solid #d0d2d4"></div>
<div class="abs" style="left:23px;top:582px;width:209px;height:15px;background:#f8f8f9;border:1px solid #c3c4c6"></div>
<div class="abs" style="left:8px;top:598px;width:268px;height:3px;background:#dbe1e1"></div>
<div class="abs" style="left:122px;top:605px;width:72px;height:24px;background:#dfe3e4;border:1px solid #bcc3c5"></div>
<div class="abs" style="left:146px;top:605px;width:1px;height:24px;background:#c3cacc"></div><div class="abs" style="left:170px;top:605px;width:1px;height:24px;background:#c3cacc"></div>
<div class="abs" style="left:117px;top:606px;width:1px;height:22px;background:#c3cacc"></div>
<div class="abs" style="left:8px;top:633px;width:24px;height:24px;background:#f7f9fa;border:1px solid #b3bcbe"></div>
<div class="abs" style="left:32px;top:633px;width:244px;height:24px;background:#fbfcfd;border:1px solid #b3bcbe;overflow:hidden"><div class="t" style="left:7.4px;top:5.0px;font-size:12.3px;letter-spacing:-0.526px;">KHUON_MUONG-COM.ASM (TOP MODEL</div>
<div class="abs" style="left:227px;top:0;width:16px;height:22px;background:#fbfcfd;border-left:1px solid #c9d0d2"></div></div>
<div class="t" style="left:36.6px;top:660.9px;font-size:12.3px;letter-spacing:-0.803px;">Layers</div>

<div class="abs" style="left:0;top:676px;width:261px;height:332px;overflow:hidden"><div class="abs" style="left:0;top:-676px">
<div class="t" style="left:56.3px;top:680.9px;font-size:12.3px;letter-spacing:-0.156px;color:#c9bfa8;">Hidden Items</div>

<div class="t" style="left:56.3px;top:700.9px;font-size:12.3px;letter-spacing:-1.011px;">01_ALL_DTM_PLN</div>

<div class="t" style="left:56.3px;top:720.9px;font-size:12.3px;letter-spacing:-1.021px;">01__ASM_ALL_DTM_PLN</div>

<div class="t" style="left:56.3px;top:740.9px;font-size:12.3px;letter-spacing:-1.164px;">01__ASM_DEF_DTM_PLN</div>

<div class="t" style="left:56.3px;top:760.9px;font-size:12.3px;letter-spacing:-1.263px;">01___PRT_ALL_DTM_PLN</div>

<div class="t" style="left:56.3px;top:780.9px;font-size:12.3px;letter-spacing:-1.399px;">01___PRT_DEF_DTM_PLN</div>

<div class="t" style="left:56.3px;top:800.9px;font-size:12.3px;letter-spacing:-1.242px;">02_ALL_AXES</div>

<div class="t" style="left:56.3px;top:820.9px;font-size:12.3px;letter-spacing:-1.181px;">02__ASM_ALL_AXES</div>

<div class="t" style="left:56.3px;top:840.9px;font-size:12.3px;letter-spacing:-1.433px;">02___PRT_ALL_AXES</div>

<div class="t" style="left:56.3px;top:860.9px;font-size:12.3px;letter-spacing:-1.284px;">03_ALL_CURVES</div>

<div class="t" style="left:56.3px;top:880.9px;font-size:12.3px;letter-spacing:-1.240px;">03__ASM_ALL_CURVES</div>

<div class="t" style="left:56.3px;top:900.9px;font-size:12.3px;letter-spacing:-1.462px;">03___PRT_ALL_CURVES</div>

<div class="t" style="left:56.3px;top:920.9px;font-size:12.3px;letter-spacing:-1.031px;">04_ALL_DTM_PNT</div>

<div class="t" style="left:56.3px;top:940.9px;font-size:12.3px;letter-spacing:-1.035px;">04__ASM_ALL_DTM_PNT</div>

<div class="t" style="left:56.3px;top:960.9px;font-size:12.3px;letter-spacing:-1.257px;">04___PRT_ALL_DTM_PNT</div>

<div class="t" style="left:56.3px;top:980.9px;font-size:12.3px;letter-spacing:-1.248px;">05_ALL_DTM_CSYS</div>

<div class="t" style="left:56.3px;top:1000.9px;font-size:12.3px;letter-spacing:-1.218px;">05__ASM_ALL_DTM_CSYS</div>

</div></div>
<div class="abs" style="left:262px;top:658px;width:14px;height:349px;background:#e1e2e4"></div><div class="abs" style="left:262px;top:658px;width:14px;height:14px;background:#f8f8f9;border:1px solid #d0d2d4"></div><div class="abs" style="left:262px;top:993px;width:14px;height:14px;background:#f8f8f9;border:1px solid #d0d2d4"></div><div class="abs" style="left:262px;top:673px;width:14px;height:205px;background:#f8f8f9;border:1px solid #c3c4c6"></div>
<svg style="left:0;top:0" width="284" height="1031" viewBox="0 0 284 1031">
<defs>
<g id="iprt"><path d="M-7.300 1.200l3.700-2.900h5.300l4.600-3.500h1.200v6.400l-3.500 3.500h-3.500v-1.400l-7.800-.4z" fill="#c5ecfa" stroke="#2f9bd0" stroke-width=".9" stroke-linejoin="round"/><path d="M-7.300 1.200h7.800v3.500M.5 1.200l4-3M4 4.700v-6l3.500-3.500" fill="none" stroke="#2f9bd0" stroke-width=".8"/><path d="M4 -1.300l3.500-3.500v6l-3.500 3.500z" fill="#4aa8d8"/></g>
<g id="isplit"><path d="M-7.300 1l3.500-3h5.500l4.500-4h1.300v9l-3.500 3.500h-2v-3l-9.300-.5z" fill="#fff" stroke="#8d9699" stroke-width=".9" stroke-linejoin="round"/><path d="M-7.300 1h9.300v5.500M2 1l3.500-3M-3.800-2v2.500h5M4 6.500v-9.500l3.500-3" fill="none" stroke="#8d9699" stroke-width=".8"/></g>
<g id="iwrk"><path d="M-7.500 4.500v-4.500l4-4h11v4.500l-4 4z" fill="#fff" stroke="#6b7375" stroke-width=".9" stroke-linejoin="round"/><path d="M-7.500 0h11v4.500M3.500 0l4-4M-3.500-4v4.500l-4 4M-3.500 .500h11" fill="none" stroke="#8d9699" stroke-width=".7"/></g>
<g id="igrp"><path d="M-7.500 -1l2-2h7v5.500l-2 1.500h-7z" fill="#bfe5f7" stroke="#2f9bd0" stroke-width=".8"/><circle cx="3.500" cy="-4" r="4" fill="#b9bff0" stroke="#8088d0" stroke-width=".6"/><circle cx="2.500" cy="-5" r="1.500" fill="#e8eaff"/><path d="M-2.500 5.500l4-10 4 10c-2 2-6 2-8 0z" fill="#e9c98c" stroke="#b98f45" stroke-width=".7"/></g>
<g id="iref"><path d="M-7.500-6h13l2-1.500v13l-2 2h-13z" fill="#bfe8f8" stroke="#2f9bd0" stroke-width="1"/><rect x="-7.500" y="-6" width="13" height="13.500" fill="#d8f2fc" stroke="#2f9bd0" stroke-width="1"/><path d="M-5 3.500v-4a4 4 0 0 1 8 0v4h-2.500v-3.500a1.500 1.500 0 0 0-3 0v3.500z" fill="#fff" stroke="#155a8a" stroke-width=".9"/></g>
<g id="isk"><path d="M-6.500 4c0-7 4-9 6.500-9s6.500 2 6.500 9" fill="none" stroke="#1f7fc0" stroke-width="1.400"/><path d="M-7.500 5.500h15" stroke="#6b7375" stroke-width="1" stroke-dasharray="1 2"/><path d="M-6.500-3.500l2 2M6.500-3.500l-2 2" stroke="#1f7fc0" stroke-width="1"/></g>
<g id="lall"><path d="M-7.500-2.500l3.500-3.500h11.500l-3.500 3.500z" fill="#f0d29a" stroke="#c9a45a" stroke-width=".8"/><path d="M-6 .2h10.500l2.500-2.500M-6 2.700h10.500l2.500-2.500M-6 5.200h10.500l2.500-2.500M-6 7.200h10.500l2.500-2.500" fill="none" stroke="#4a5254" stroke-width=".9"/></g>
<g id="lasm"><rect x="-7.500" y="-7.500" width="12" height="14" fill="#fcfcfc" stroke="#8d9699" stroke-width=".9"/><path d="M-5.500-4.500l1.500 1.500 2.500-3M-5.500-.5l1.500 1.500 2.500-3" fill="none" stroke="#1f6fb0" stroke-width="1.300"/><path d="M-.5-3.500h3.500M-.5.500h3.500" stroke="#a8b0b2" stroke-width=".9"/><path d="M-5 3l1.500 1.500 2-2" fill="none" stroke="#a8b0b2" stroke-width=".9"/><path d="M-5.500 7l4-3.500h10l-4 3.500z" fill="#fff" stroke="#4a5254" stroke-width=".9"/></g>
<g id="ldef"><path d="M-7.500 2.500l4.500-4.500h11l-4.500 4.500z" fill="#fff" stroke="#6b7375" stroke-width=".9"/></g>
<g id="lprt"><path d="M-7 -1.500l4-3h10.500l-3.500 3zM-7 -1.500v1.800h11v-1.800M-7 2h11l3.500-3M-7 2v1.800h11V2M-7 5.500h11l3.500-3M4 5.500V3.800M-7 3.800v1.700M7.500-4.500v7" fill="#fff" stroke="#4a5254" stroke-width=".8" stroke-linejoin="round"/><path d="M-1.500 7v-9.500c0-2 3-4.500 5-5.500" fill="none" stroke="#1f7fd0" stroke-width="2.600" stroke-linecap="round"/><path d="M-1.500 7v-9.500c0-2 3-4.500 5-5.500" fill="none" stroke="#6fc0f0" stroke-width=".9" stroke-linecap="round"/></g>
<g id="lhid" opacity=".55"><path d="M-7 -1.500l4-3h10.500l-3.500 3zM-7 -1.500v1.800h11v-1.800M-7 2h11l3.500-3M-7 2v1.800h11V2M-7 5.500h11l3.500-3M4 5.500V3.800M-7 3.800v1.700M7.500-4.500v7" fill="#f6f1e4" stroke="#b5a98c" stroke-width=".8" stroke-linejoin="round"/><path d="M-1.500 7v-9.500c0-2 3-4.500 5-5.500" fill="none" stroke="#c9c2b0" stroke-width="2.600" stroke-linecap="round"/></g>
<g id="exp"><path d="M-1.800-3.300v6.600l3.800-3.300z" fill="#555d5f"/></g>
</defs>
<g fill="#fff" stroke="#2f3638" stroke-width="1.100"><rect x="12.500" y="170.500" width="3" height="3"/><rect x="12.500" y="176.500" width="3" height="3"/><rect x="12.500" y="182.500" width="3" height="3"/><rect x="19.500" y="176.500" width="3" height="3"/></g><path d="M14 173.500v3M14 179.500v3M15.500 178h4" stroke="#2f3638" stroke-width="1.100"/>
<g fill="#fbe9c0" stroke="#c99a45" stroke-width=".9"><path d="M39.500 171.500h3l1 1h4v6h-8z"/><path d="M42.500 175h3l1 1h4v6h-8z"/><path d="M45.500 178.500h3l1 1h4v6h-8z"/></g>
<path d="M14 202.500h8.500l-4.250 6.500z" fill="#555d5f"/>
<path d="M29 204.500l3-2.500h9v10l-3 2.500h-9z" fill="#8d9699"/><rect x="29" y="204.500" width="9" height="10" fill="#4db030"/><path d="M29 204.500l3-2.500h9l-3 2.500z" fill="#b3babc"/>
<path d="M50 200v14" stroke="#b3babc" stroke-width="1.500" stroke-dasharray="1.500 2.500"/>
<g fill="#d8f0fb" stroke="#1f7fb8" stroke-width="1.100"><rect x="72" y="200" width="6" height="3"/><rect x="74" y="205.5" width="6" height="3"/><rect x="76" y="211" width="6" height="3"/></g><path d="M66 200.5h3.500l-1.750 2.300zM68 206h3.500l-1.750 2.300zM70 211.5h3.500l-1.750 2.300z" fill="#2f3638"/>
<g fill="#6b7375" stroke="#3a4143" stroke-width=".8"><rect x="97" y="199.5" width="3.500" height="3.500"/><rect x="97" y="205.5" width="3.500" height="3.500"/><rect x="97" y="211.5" width="3.500" height="3.500"/></g><path d="M92.5 199.5v3.500l2.300-1.750zM92.5 205.5v3.500l2.300-1.750zM92.5 211.5v3.500l2.300-1.750z" fill="#2f3638"/>
<rect x="115.500" y="200.500" width="12" height="13" fill="#eceeef" stroke="#a8b0b2"/><path d="M115.500 203.500h12M119.500 200.500v13M123.500 200.500v13" stroke="#a8b0b2"/><g transform="translate(125.500,212.500) scale(.85)" ><path d="M-4.600 0C-2.800-3.200 2.800-3.200 4.600 0C2.800 3.200-2.800 3.200-4.600 0z" fill="#8d9699"/><circle r="1.600" fill="#eceeef"/><circle r=".8" fill="#8d9699"/></g>
<g fill="#fff" stroke="#2f3638" stroke-width="1.100"><rect x="148.500" y="199.500" width="3" height="3"/><rect x="148.500" y="211.500" width="3" height="3"/></g><rect x="148.500" y="205.500" width="3" height="3" fill="#4ab0e8" stroke="#1f6fb0" stroke-width="1.100"/><path d="M150 202.500v3M150 208.500v3" stroke="#2f3638"/><path d="M154 207.500h9.500l-3.700 4v3.500h-2.100v-3.500z" fill="#3a4143"/>
<rect x="172.500" y="200.500" width="12" height="13" fill="#fff" stroke="#6b7375"/><rect x="172.500" y="200.500" width="4" height="13" fill="#4ab0e8" stroke="#1f6fb0"/><path d="M176.500 204h8M180.500 200.500v4" stroke="#6b7375"/><path d="M179.500 206.500h5l2.500 2.500v6h-7.500z" fill="#f4f6f7" stroke="#8d9699"/><path d="M181 210.500h4M181 212.500h4" stroke="#8d9699" stroke-width=".8"/>
<path d="M204.500 213.500l4-4h11l-4 4z" fill="#fff" stroke="#3a4143" stroke-width=".9"/><path d="M204.500 209.500l4-4h11l-4 4z" fill="#fff" stroke="#3a4143" stroke-width=".9"/><path d="M204.500 205l4-4h11l-4 4z" fill="url(#gcy)" stroke="#1f6f9c" stroke-width=".9"/>
<rect x="228.500" y="199.500" width="3.500" height="3.500" fill="#fff" stroke="#6b7375"/><path d="M230.300 203v11.500M230.300 207h5" stroke="#6b7375"/><rect x="234.500" y="204.500" width="4" height="4" fill="#4ab0e8" stroke="#1f6fb0"/><path d="M238.500 207.500v6.500l1.800-1.500 1.200 2.500 1-.5-1.200-2.400h2.300z" fill="#fff" stroke="#2f3638" stroke-width=".8"/>
<path d="M257.5 199.5h8l4 4v11.500h-12z" fill="#eef1f2" stroke="#c3c9cb"/><path d="M265.5 199.5v4h4" fill="#dde2e4" stroke="#c3c9cb"/><circle cx="260.5" cy="206.5" r="1.100" fill="none" stroke="#a8b0b2" stroke-width=".8"/><circle cx="260.5" cy="211" r="1.100" fill="none" stroke="#a8b0b2" stroke-width=".8"/><path d="M263.0 206.5h4.500M263.0 211h4.500" stroke="#a8b0b2" stroke-width=".9"/><path d="M272.0 214v2.500h-2.500z" fill="#3a4143"/>
<path d="M12.500 229.500h15.500l-6 6.500v6.500h-3.500v-6.500z" fill="#fbfcfc" stroke="#6b7375" stroke-width="1.100" stroke-linejoin="round"/>
<path d="M219.500 233l7 7M226.500 233l-7 7" stroke="#a8b0b2" stroke-width="1.200"/>
<path d="M238.7 234.0h7l-3.5 4z" fill="#555d5f"/>
<path d="M258 235.500h11M263.500 230v11" stroke="#8d9699" stroke-width="2.200"/>
<g clip-path="url(#cliptree)">
<path d="M19.500 252v330" stroke="#c3c9cb" stroke-width="1"/>
<path d="M31 256.500h15" stroke="#a8a0b8" stroke-width="1"/><path d="M45 255l2 1" stroke="#7a50b0" stroke-width="1"/><path d="M51 257.500h145" stroke="#3a4143" stroke-width="1" stroke-dasharray="1 1"/>
<rect x="16" y="263" width="7" height="10" fill="#f7fbfc"/><use href="#exp" x="19" y="268"/>
<use href="#iwrk" x="38.500" y="268"/>
<rect x="16" y="281" width="7" height="10" fill="#f7fbfc"/><use href="#exp" x="19" y="286"/>
<use href="#igrp" x="38.500" y="286"/>
<path d="M19.500 304.5h8.500" stroke="#c3c9cb"/>
<use href="#iref" x="38.500" y="304"/>
<path d="M19.500 322.5h8.500" stroke="#c3c9cb"/>
<use href="#isplit" x="38.500" y="322"/>
<path d="M19.500 340.5h8.500" stroke="#c3c9cb"/>
<use href="#isplit" x="38.500" y="340"/>
<rect x="16" y="353" width="7" height="10" fill="#f7fbfc"/><use href="#exp" x="19" y="358"/>
<use href="#iprt" x="38.500" y="358"/>
<rect x="16" y="371" width="7" height="10" fill="#f7fbfc"/><use href="#exp" x="19" y="376"/>
<use href="#iprt" x="38.500" y="376"/>
<rect x="16" y="389" width="7" height="10" fill="#f7fbfc"/><use href="#exp" x="19" y="394"/>
<use href="#iprt" x="38.500" y="394"/>
<rect x="16" y="407" width="7" height="10" fill="#f7fbfc"/><use href="#exp" x="19" y="412"/>
<use href="#iprt" x="38.500" y="412"/>
<rect x="16" y="425" width="7" height="10" fill="#f7fbfc"/><use href="#exp" x="19" y="430"/>
<use href="#iprt" x="38.500" y="430"/>
<rect x="16" y="443" width="7" height="10" fill="#f7fbfc"/><use href="#exp" x="19" y="448"/>
<use href="#iprt" x="38.500" y="448"/>
<rect x="16" y="461" width="7" height="10" fill="#f7fbfc"/><use href="#exp" x="19" y="466"/>
<use href="#iprt" x="38.500" y="466"/>
<rect x="16" y="479" width="7" height="10" fill="#f7fbfc"/><use href="#exp" x="19" y="484"/>
<use href="#iprt" x="38.500" y="484"/>
<rect x="16" y="497" width="7" height="10" fill="#f7fbfc"/><use href="#exp" x="19" y="502"/>
<use href="#iprt" x="38.500" y="502"/>
<rect x="16" y="515" width="7" height="10" fill="#f7fbfc"/><use href="#exp" x="19" y="520"/>
<use href="#iprt" x="38.500" y="520"/>
<rect x="16" y="533" width="7" height="10" fill="#f7fbfc"/><use href="#exp" x="19" y="538"/>
<use href="#iprt" x="38.500" y="538"/>
<rect x="16" y="551" width="7" height="10" fill="#f7fbfc"/><use href="#exp" x="19" y="556"/>
<use href="#iprt" x="38.500" y="556"/>
<path d="M19.500 574.5h8.500" stroke="#c3c9cb"/>
<use href="#isk" x="38.500" y="574"/>
</g>
<path d="M14 612.500h8.500l-4.250 6.500z" fill="#555d5f"/>
<path d="M29.500 623l3.500-3h12l-3.500 3z" fill="#6b7375"/><path d="M29.500 619l3.500-3h12l-3.500 3z" fill="#6b7375"/><path d="M29.500 615l3.500-3.500h12l-3.500 3.500z" fill="#4db030"/>
<path d="M53 610v14" stroke="#b3babc" stroke-width="1.500" stroke-dasharray="1.500 2.500"/>
<g fill="#d8f0fb" stroke="#1f7fb8" stroke-width="1.100"><rect x="75" y="610" width="6" height="3"/><rect x="77" y="615.5" width="6" height="3"/><rect x="79" y="621" width="6" height="3"/></g><path d="M69 610.5h3.500l-1.750 2.300zM71 616h3.500l-1.750 2.300zM73 621.5h3.500l-1.750 2.300z" fill="#2f3638"/>
<g fill="#6b7375" stroke="#3a4143" stroke-width=".8"><rect x="100" y="609.5" width="3.500" height="3.500"/><rect x="100" y="615.5" width="3.500" height="3.500"/><rect x="100" y="621.5" width="3.500" height="3.500"/></g><path d="M95.5 609.5v3.500l2.300-1.750zM95.5 615.5v3.500l2.300-1.750zM95.5 621.5v3.500l2.300-1.750z" fill="#2f3638"/>
<path d="M125.5 622l3.500-3.500h12l-3.500 3.500z" fill="#fff" stroke="#3a4143" stroke-width=".9"/><path d="M125.5 618l3.500-3.500h12l-3.500 3.500z" fill="#fff" stroke="#3a4143" stroke-width=".9"/><path d="M125.5 614l3.500-3.500h12l-3.500 3.500z" fill="url(#gcy)" stroke="#1f6f9c" stroke-width=".9"/><g transform="translate(138,623.500) scale(.85)"><use href="#seye"/></g>
<path d="M150.0 616l3.500-3.500h12l-3.500 3.500z" fill="url(#gcy)" stroke="#1f6f9c" stroke-width=".9"/><rect x="158.500" y="618.500" width="5" height="5" fill="#eceeef" stroke="#4a5254" stroke-width=".9"/><rect x="160.500" y="616.500" width="5" height="5" fill="none" stroke="#4a5254" stroke-width=".9"/>
<rect x="174.500" y="609.500" width="15" height="15" fill="none" stroke="#1f6fb0" stroke-width="1.200" stroke-dasharray="3 2"/><path d="M174.0 619l3.500-3.500h12l-3.500 3.500z" fill="url(#gcy)" stroke="#1f6f9c" stroke-width=".9"/>
<path d="M212 614l3 2.700-3 2.700M216.500 614l3 2.700-3 2.700" fill="none" stroke="#2f3638" stroke-width="1.200"/>
<path d="M228.5 623l3.500-3.500h12l-3.500 3.500z" fill="#fff" stroke="#3a4143" stroke-width=".9"/><path d="M228.5 619l3.500-3.500h12l-3.500 3.500z" fill="#fff" stroke="#3a4143" stroke-width=".9"/><path d="M228.5 615l3.500-3.500h12l-3.500 3.500z" fill="url(#gcy)" stroke="#1f6f9c" stroke-width=".9"/><rect x="238.500" y="617.500" width="6" height="7" fill="#f4f6f7" stroke="#8d9699" stroke-width=".9"/><path d="M240 620h3M240 622h3" stroke="#8d9699" stroke-width=".7"/><path d="M246.500 623.500v2.500h-2.500z" fill="#3a4143"/>
<path d="M257.5 609.5h8l4 4v11.500h-12z" fill="#eef1f2" stroke="#c3c9cb"/><path d="M265.5 609.5v4h4" fill="#dde2e4" stroke="#c3c9cb"/><circle cx="260.5" cy="616.5" r="1.100" fill="none" stroke="#a8b0b2" stroke-width=".8"/><circle cx="260.5" cy="621" r="1.100" fill="none" stroke="#a8b0b2" stroke-width=".8"/><path d="M263.0 616.5h4.500M263.0 621h4.500" stroke="#a8b0b2" stroke-width=".9"/><path d="M272.0 624v2.500h-2.500z" fill="#3a4143"/>
<path d="M15.500 638.500v12.500l3-2.500 2 4.500 1.800-.8-2-4.400h4z" fill="#fff" stroke="#2f3638" stroke-width="1"/>
<path d="M11.5 672l3.500-3.500h12l-3.500 3.500z" fill="#fff" stroke="#3a4143" stroke-width=".9"/><path d="M11.5 668l3.500-3.500h12l-3.500 3.500z" fill="#fff" stroke="#3a4143" stroke-width=".9"/><path d="M11.5 664l3.500-3.500h12l-3.500 3.500z" fill="url(#gcy)" stroke="#1f6f9c" stroke-width=".9"/>
<path d="M19.500 679v329" stroke="#c3c9cb" stroke-width="1" stroke-dasharray="6 3"/>
<rect x="16" y="682" width="7" height="10" fill="#f7fbfc"/><use href="#exp" x="19" y="687"/><use href="#lhid" x="39" y="687"/>
<rect x="16" y="702" width="7" height="10" fill="#f7fbfc"/><use href="#exp" x="19" y="707"/><use href="#lall" x="39" y="707"/>
<rect x="16" y="722" width="7" height="10" fill="#f7fbfc"/><use href="#exp" x="19" y="727"/><use href="#lasm" x="39" y="727"/>
<rect x="16" y="742" width="7" height="10" fill="#f7fbfc"/><use href="#exp" x="19" y="747"/><use href="#ldef" x="39" y="747"/>
<rect x="16" y="762" width="7" height="10" fill="#f7fbfc"/><use href="#exp" x="19" y="767"/><use href="#lprt" x="39" y="767"/>
<rect x="16" y="782" width="7" height="10" fill="#f7fbfc"/><use href="#exp" x="19" y="787"/><use href="#lprt" x="39" y="787"/>
<rect x="16" y="802" width="7" height="10" fill="#f7fbfc"/><use href="#exp" x="19" y="807"/><use href="#lall" x="39" y="807"/>
<rect x="16" y="822" width="7" height="10" fill="#f7fbfc"/><use href="#exp" x="19" y="827"/><use href="#lasm" x="39" y="827"/>
<rect x="16" y="842" width="7" height="10" fill="#f7fbfc"/><use href="#exp" x="19" y="847"/><use href="#lprt" x="39" y="847"/>
<rect x="16" y="862" width="7" height="10" fill="#f7fbfc"/><use href="#exp" x="19" y="867"/><use href="#lall" x="39" y="867"/>
<rect x="16" y="882" width="7" height="10" fill="#f7fbfc"/><use href="#exp" x="19" y="887"/><use href="#lasm" x="39" y="887"/>
<rect x="16" y="902" width="7" height="10" fill="#f7fbfc"/><use href="#exp" x="19" y="907"/><use href="#lprt" x="39" y="907"/>
<rect x="16" y="922" width="7" height="10" fill="#f7fbfc"/><use href="#exp" x="19" y="927"/><use href="#lall" x="39" y="927"/>
<rect x="16" y="942" width="7" height="10" fill="#f7fbfc"/><use href="#exp" x="19" y="947"/><use href="#lasm" x="39" y="947"/>
<rect x="16" y="962" width="7" height="10" fill="#f7fbfc"/><use href="#exp" x="19" y="967"/><use href="#lprt" x="39" y="967"/>
<rect x="16" y="982" width="7" height="10" fill="#f7fbfc"/><use href="#exp" x="19" y="987"/><use href="#lall" x="39" y="987"/>
<g clip-path="url(#cliplay)"><rect x="16" y="1002" width="7" height="10" fill="#f7fbfc"/><use href="#exp" x="19" y="1007"/><use href="#lasm" x="39" y="1007"/></g>
<defs><clipPath id="cliptree"><rect x="0" y="252" width="261" height="329"/></clipPath><clipPath id="cliplay"><rect x="0" y="676" width="261" height="332"/></clipPath></defs>
<path d="M265.500 264.500h7l-3.500-4z" fill="#a8b0b2"/><path d="M265.500 572.500h7l-3.500 4z" fill="#8d9699"/><path d="M17.500 586v7l-4-3.500z" fill="#a8b0b2"/><path d="M252 586v7l4-3.500z" fill="#8d9699"/><path d="M263.5 642.2h8l-4.0 4.5z" fill="#3a4143"/><path d="M265.500 667.500h7l-3.500-4z" fill="#a8b0b2"/><path d="M265.500 997.500h7l-3.500 4z" fill="#8d9699"/>
</svg>
<svg style="left:0;top:0" width="1760" height="1031" viewBox="0 0 1760 1031"><defs>
<clipPath id="cv"><rect x="284" y="165" width="1476" height="847"/></clipPath>
<linearGradient id="ghole" x1="0" y1="0" x2="1" y2="0"><stop offset="0" stop-color="#7a8593"/><stop offset=".55" stop-color="#a9b4c3"/><stop offset="1" stop-color="#98a4b4"/></linearGradient>
<linearGradient id="gcyl" x1="0" y1="0" x2="0" y2="1"><stop offset="0" stop-color="#8b97a7"/><stop offset=".35" stop-color="#c3ccd8"/><stop offset="1" stop-color="#6f7a88"/></linearGradient>
<linearGradient id="gbar" x1="0" y1="0" x2="0" y2="1"><stop offset="0" stop-color="#00ff00"/><stop offset=".55" stop-color="#00f000"/><stop offset=".62" stop-color="#00c800"/><stop offset="1" stop-color="#00a000"/></linearGradient>
<linearGradient id="grod" x1="0" y1="0" x2="0" y2="1"><stop offset="0" stop-color="#00ff00"/><stop offset=".6" stop-color="#00f800"/><stop offset="1" stop-color="#00b800"/></linearGradient>
<linearGradient id="gspoon" x1="0" y1="0" x2="1" y2="1"><stop offset="0" stop-color="#aab5c4"/><stop offset=".6" stop-color="#9aa6b6"/><stop offset="1" stop-color="#e8edf4"/></linearGradient>
<linearGradient id="gend" x1="0" y1="0" x2="1" y2="0"><stop offset="0" stop-color="#a9b4c3"/><stop offset="1" stop-color="#6f7a88"/></linearGradient>
</defs><g clip-path="url(#cv)"><polygon points="865.0,415.0 921.0,415.0 925.0,455.0 947.5,492.5 947.5,511.2 987.5,512.5 987.5,600.0 960.0,626.2 956.2,690.0 943.8,916.2 963.8,922.5 963.8,957.5 922.5,955.0 863.8,810.0 866.2,695.0 848.0,690.0 848.0,620.0 862.5,516.2 861.5,497.0" fill="#0055ea" stroke="#14181c" stroke-width="0.8" stroke-linejoin="round" />
<g clip-path="url(#cblue)">
<ellipse cx="897.0" cy="462.0" rx="16" ry="30" fill="#004fd8" stroke="#001a60" stroke-width="0.8" />
<ellipse cx="897.0" cy="466.0" rx="11" ry="22" fill="#0058ee" stroke="#001a60" stroke-width="0.8" />
<ellipse cx="897.0" cy="470.0" rx="6" ry="13" fill="#004fd8" stroke="#001a60" stroke-width="0.7" />
<ellipse cx="872.0" cy="452.0" rx="1.2" ry="9" fill="#8f9bab" stroke="#3a4350" stroke-width="0.6" />
</g>
<clipPath id="cblue"><polygon points="865.0,415.0 921.0,415.0 925.0,455.0 947.5,492.5 947.5,511.2 987.5,512.5 987.5,600.0 960.0,626.2 956.2,690.0 943.8,916.2 963.8,922.5 963.8,957.5 922.5,955.0 863.8,810.0 866.2,695.0 848.0,690.0 848.0,620.0 862.5,516.2 861.5,497.0"/></clipPath>
<polygon points="571.2,317.0 662.5,542.0 636.2,1011.8 627.5,1011.8 543.2,807.5" fill="#8c98a8" stroke="#14181c" stroke-width="0.8" stroke-linejoin="round" />
<polygon points="571.2,317.0 601.2,315.5 692.5,540.0 662.5,542.0" fill="#94a1b2" stroke="#14181c" stroke-width="0.8" stroke-linejoin="round" />
<polygon points="662.5,542.0 692.5,540.0 666.2,1007.5 636.2,1011.8" fill="#7f8a97" stroke="#14181c" stroke-width="0.8" stroke-linejoin="round" />
<ellipse cx="580.0" cy="425.0" rx="2.8" ry="12.5" fill="url(#ghole)" stroke="#14181c" stroke-width="0.8" />
<ellipse cx="562.5" cy="576.2" rx="3" ry="12.5" fill="url(#ghole)" stroke="#14181c" stroke-width="0.8" />
<ellipse cx="645.0" cy="585.0" rx="3" ry="13" fill="url(#ghole)" stroke="#14181c" stroke-width="0.8" />
<ellipse cx="603.0" cy="672.5" rx="6.3" ry="29" fill="url(#ghole)" stroke="#14181c" stroke-width="0.8" />
<ellipse cx="560.8" cy="763.8" rx="2.8" ry="13" fill="url(#ghole)" stroke="#14181c" stroke-width="0.8" />
<ellipse cx="643.0" cy="772.5" rx="3" ry="13" fill="url(#ghole)" stroke="#14181c" stroke-width="0.8" />
<ellipse cx="625.8" cy="922.5" rx="3" ry="13" fill="url(#ghole)" stroke="#14181c" stroke-width="0.8" />
<polygon points="610.0,337.0 708.8,333.0 727.5,380.0 630.0,384.5" fill="#94a1b2" stroke="#14181c" stroke-width="0.8" stroke-linejoin="round" />
<polygon points="630.0,384.5 726.2,380.0 726.8,385.5 632.0,390.0" fill="#8c98a8" stroke="#14181c" stroke-width="0.8" stroke-linejoin="round" />
<polygon points="726.2,380.0 727.5,380.0 780.0,511.2 719.2,512.5" fill="#8c98a8" stroke="#14181c" stroke-width="0.8" stroke-linejoin="round" />
<ellipse cx="739.5" cy="433.8" rx="2.5" ry="9.5" fill="url(#ghole)" stroke="#14181c" stroke-width="0.8" />
<ellipse cx="765.8" cy="500.0" rx="2.5" ry="9.5" fill="url(#ghole)" stroke="#14181c" stroke-width="0.8" />
<polygon points="632.0,390.0 668.0,390.0 715.0,508.8 681.2,510.8" fill="#94a1b2" stroke="#14181c" stroke-width="0.8" stroke-linejoin="round" />
<polyline points="647.6,389.4 693.8,508.8" fill="none" stroke="#14181c" stroke-width="0.8" />
<polyline points="660.0,398.0 705.0,508.8" fill="none" stroke="#14181c" stroke-width="0.5" />
<polygon points="668.0,390.0 726.8,385.5 719.2,512.5 715.0,508.8" fill="#7f8a97" stroke="#14181c" stroke-width="0.8" stroke-linejoin="round" />
<polygon points="681.2,510.8 715.0,508.8 715.0,513.8 682.5,515.8" fill="#7f8a97" stroke="#14181c" stroke-width="0.8" stroke-linejoin="round" />
<polygon points="682.5,515.8 780.0,511.2 798.8,557.0 691.2,562.5 692.5,540.0" fill="#94a1b2" stroke="#14181c" stroke-width="0.8" stroke-linejoin="round" />
<polygon points="691.2,562.5 798.8,557.0 774.5,1003.0 666.2,1007.5" fill="#7f8a97" stroke="#14181c" stroke-width="0.8" stroke-linejoin="round" />
<polygon points="708.8,333.0 806.2,328.8 822.0,367.0 790.0,395.0 803.8,430.0 843.8,515.0 862.5,516.2 880.0,517.5 897.5,553.8 798.8,557.0" fill="#94a1b2" stroke="#14181c" stroke-width="0.8" stroke-linejoin="round" />
<polygon points="798.8,557.0 897.5,553.8 893.8,622.5 856.2,630.0 851.2,690.0 840.0,925.5 877.0,930.0 873.8,998.0 774.5,1003.0" fill="#7f8a97" stroke="#14181c" stroke-width="0.8" stroke-linejoin="round" />
<polyline points="666.2,1007.5 774.5,1003.0" fill="none" stroke="#ff5a1a" stroke-width="1.8" />
<polygon points="840.0,906.2 867.5,910.0 876.2,928.8 840.0,924.5" fill="#cf8a00" stroke="#14181c" stroke-width="0.8" stroke-linejoin="round" />
<polygon points="911.2,323.8 1002.5,547.5 998.8,613.0 975.0,560.0 947.5,492.5 925.0,455.0 913.8,430.0 905.0,410.0 909.0,342.0" fill="#8c98a8" stroke="#14181c" stroke-width="0.8" stroke-linejoin="round" />
<polygon points="947.5,511.2 987.5,512.5 987.5,547.5 947.5,550.0" fill="#0046c8" stroke="#14181c" stroke-width="0.8" stroke-linejoin="round" />
<polygon points="947.5,550.0 987.5,547.5 993.8,590.0 998.8,612.5 990.0,600.0 953.8,603.8" fill="url(#gcyl)" stroke="#14181c" stroke-width="0.8" stroke-linejoin="round" />
<polygon points="953.8,603.8 990.0,600.0 998.8,612.5 960.0,626.2" fill="#0064ff" stroke="#14181c" stroke-width="0.8" stroke-linejoin="round" />
<ellipse cx="993.8" cy="562.5" rx="6" ry="27" fill="url(#ghole)" stroke="#14181c" stroke-width="0.8" />
<polygon points="911.2,323.8 981.2,320.8 996.2,357.5 1036.2,358.8 1095.0,502.5 1058.8,508.8 1072.5,545.0 1037.5,547.0 1002.5,547.5" fill="#94a1b2" stroke="#14181c" stroke-width="0.8" stroke-linejoin="round" />
<polyline points="946.2,322.5 1037.5,547.0" fill="none" stroke="#14181c" stroke-width="0.8" />
<polygon points="1058.8,508.8 1095.0,504.5 1093.8,545.0 1072.5,545.0" fill="#b87a00" stroke="#14181c" stroke-width="0.8" stroke-linejoin="round" />
<polygon points="1002.5,547.5 1093.8,545.0 1092.5,570.0 1101.2,600.0 1106.2,618.8 1103.8,690.0 1091.2,910.0 1090.0,913.8 1051.2,921.2 1047.5,990.0 977.5,993.8 963.8,957.5 963.8,922.5 943.8,916.2 956.2,690.0 960.0,626.2 998.8,612.5" fill="#7f8a97" stroke="#14181c" stroke-width="0.8" stroke-linejoin="round" />
<polyline points="1037.5,547.0 1012.5,992.5" fill="none" stroke="#14181c" stroke-width="0.8" />
<polygon points="1072.5,545.0 1093.8,545.0 1092.5,570.0 1101.2,600.0 1070.0,597.0" fill="#8a95a4" stroke="#14181c" stroke-width="0.8" stroke-linejoin="round" />
<polygon points="1070.0,597.0 1101.2,600.0 1106.2,618.8 1068.8,615.0" fill="#e09800" stroke="#14181c" stroke-width="0.8" stroke-linejoin="round" />
<polygon points="1051.2,921.2 1071.2,917.5 1070.0,948.8 1050.0,951.2" fill="#b87a00" stroke="#14181c" stroke-width="0.8" stroke-linejoin="round" />
<polygon points="963.8,922.5 981.2,924.5 977.5,993.8 963.8,957.5" fill="#8c98a8" stroke="#14181c" stroke-width="0.8" stroke-linejoin="round" />
<ellipse cx="972.0" cy="947.5" rx="5.5" ry="24" fill="url(#ghole)" stroke="#14181c" stroke-width="0.8" />
<polygon points="1184.5,352.5 1243.8,497.5 1208.8,501.2 1221.2,538.8 1218.8,605.0 1255.0,612.5 1247.5,737.8 1238.7,905.0 1227.0,881.0 1200.0,884.0 1160.0,797.5 1121.2,795.0 1107.5,692.5 1138.8,665.0 1158.8,485.0 1162.5,413.8 1178.8,413.8 1182.5,392.5" fill="#cf8a00" stroke="#14181c" stroke-width="0.8" stroke-linejoin="round" />
<g clip-path="url(#corange)">
<ellipse cx="1199.0" cy="647.0" rx="44" ry="222" fill="#f0a200" stroke="#14181c" stroke-width="0.6" transform="rotate(-2.3 1199.0 647.0)" />
<g clip-path="url(#cE1)">
<ellipse cx="1157.0" cy="645.0" rx="44" ry="216" fill="#cf8a00" stroke="#14181c" stroke-width="0.6" transform="rotate(-2.3 1157.0 645.0)" />
</g>
<ellipse cx="1199.0" cy="647.0" rx="47" ry="226" fill="none" stroke="#14181c" stroke-width="0.5" transform="rotate(-2.3 1199.0 647.0)" />
</g>
<clipPath id="corange"><polygon points="1184.5,352.5 1243.8,497.5 1208.8,501.2 1221.2,538.8 1218.8,605.0 1255.0,612.5 1247.5,737.8 1238.7,905.0 1227.0,881.0 1200.0,884.0 1160.0,797.5 1121.2,795.0 1107.5,692.5 1138.8,665.0 1158.8,485.0 1162.5,413.8 1178.8,413.8 1182.5,392.5"/></clipPath>
<clipPath id="cE1"><ellipse cx="1199" cy="647" rx="44" ry="222" transform="rotate(-2.3 1199 647)"/></clipPath>
<ellipse cx="1191.2" cy="406.2" rx="2.3" ry="11" fill="url(#ghole)" stroke="#14181c" stroke-width="0.6" />
<ellipse cx="1199.5" cy="413.8" rx="2" ry="10" fill="url(#ghole)" stroke="#14181c" stroke-width="0.6" />
<ellipse cx="1226.2" cy="478.8" rx="2" ry="8" fill="url(#ghole)" stroke="#14181c" stroke-width="0.6" />
<ellipse cx="1192.0" cy="905.0" rx="1.5" ry="7" fill="url(#ghole)" stroke="#14181c" stroke-width="0.6" />
<ellipse cx="1200.0" cy="908.0" rx="1.5" ry="6" fill="url(#ghole)" stroke="#14181c" stroke-width="0.6" />
<polygon points="1133.3,635.8 1130.3,628.3 1138.1,625.9 1150.3,636.6 1149.3,638.8" fill="#98a4b4" stroke="#14181c" stroke-width="0.8" stroke-linejoin="round" />
<polyline points="1134.9,632.7 1143.1,636.2" fill="none" stroke="#e8edf4" stroke-width="1.2" />
<polygon points="1139.6,672.2 1131.7,670.4 1134.2,662.6 1149.9,658.6 1151.1,660.7" fill="#98a4b4" stroke="#14181c" stroke-width="0.8" stroke-linejoin="round" />
<polyline points="1137.9,669.2 1145.5,664.3" fill="none" stroke="#e8edf4" stroke-width="1.2" />
<polygon points="1132.2,598.5 1133.6,590.5 1141.5,592.5 1151.4,615.8 1149.4,617.1" fill="#98a4b4" stroke="#14181c" stroke-width="0.8" stroke-linejoin="round" />
<polyline points="1135.2,596.6 1140.4,603.9" fill="none" stroke="#e8edf4" stroke-width="1.2" />
<polygon points="1145.0,705.3 1137.3,707.9 1135.4,699.9 1151.4,680.2 1153.5,681.3" fill="#98a4b4" stroke="#14181c" stroke-width="0.8" stroke-linejoin="round" />
<polyline points="1142.0,703.6 1146.0,695.6" fill="none" stroke="#e8edf4" stroke-width="1.2" />
<polygon points="1135.0,565.6 1138.1,558.1 1145.3,561.9 1153.4,597.0 1151.2,597.8" fill="#98a4b4" stroke="#14181c" stroke-width="0.8" stroke-linejoin="round" />
<polyline points="1138.3,564.4 1141.7,572.7" fill="none" stroke="#e8edf4" stroke-width="1.2" />
<polygon points="1150.8,735.6 1143.9,739.9 1140.2,732.6 1154.4,699.3 1156.7,700.0" fill="#98a4b4" stroke="#14181c" stroke-width="0.8" stroke-linejoin="round" />
<polyline points="1147.5,734.7 1149.6,725.9" fill="none" stroke="#e8edf4" stroke-width="1.2" />
<polygon points="1140.0,538.9 1144.1,531.8 1150.8,536.5 1156.5,581.5 1154.2,582.1" fill="#98a4b4" stroke="#14181c" stroke-width="0.8" stroke-linejoin="round" />
<polyline points="1143.5,538.1 1145.8,546.8" fill="none" stroke="#e8edf4" stroke-width="1.2" />
<polygon points="1157.9,760.6 1151.5,765.6 1147.0,758.9 1158.4,714.8 1160.7,715.2" fill="#98a4b4" stroke="#14181c" stroke-width="0.8" stroke-linejoin="round" />
<polyline points="1154.4,760.0 1155.4,751.1" fill="none" stroke="#e8edf4" stroke-width="1.2" />
<polygon points="1146.8,519.9 1151.5,513.2 1157.7,518.4 1160.5,570.5 1158.1,570.9" fill="#98a4b4" stroke="#14181c" stroke-width="0.8" stroke-linejoin="round" />
<polyline points="1150.3,519.4 1151.9,528.3" fill="none" stroke="#e8edf4" stroke-width="1.2" />
<polygon points="1166.0,778.1 1160.0,783.7 1155.0,777.3 1163.0,725.7 1165.4,725.9" fill="#98a4b4" stroke="#14181c" stroke-width="0.8" stroke-linejoin="round" />
<polyline points="1162.5,777.9 1162.7,768.9" fill="none" stroke="#e8edf4" stroke-width="1.2" />
<polygon points="1170.8,477.4 1162.5,564.7 1165.3,565.0 1177.2,478.1" fill="#a4afbe" stroke="#14181c" stroke-width="0.6" stroke-linejoin="round" />
<g transform="translate(1176.1,459.3) rotate(96.6)"><path d="M24.0 0 C13.9 -2.1 9.3 -6.1 0 -6.1 C-13.9 -6.1 -15.5 -3.0 -15.5 0 C-15.5 3.0 -13.9 6.1 0 6.1 C9.3 6.1 13.9 2.1 24.0 0z" fill="url(#gspoon)" stroke="#14181c" stroke-width=".9"/>
<path d="M-3.1 -4.7 C-11.6 -4.8 -12.7 -1.8 -12.4 1.2 C-10.8 4.5 -4.6 4.8 1.5 4.5" fill="none" stroke="#eef2f7" stroke-width="2"/>
<path d="M-8.5 -3.3 L-14.7 -4.2 M-8.5 3.6 L-13.9 4.8" stroke="#14181c" stroke-width=".6"/>
</g>
<polygon points="1187.6,813.1 1170.5,731.1 1167.8,731.6 1181.3,814.2" fill="#a4afbe" stroke="#14181c" stroke-width="0.6" stroke-linejoin="round" />
<g transform="translate(1187.9,831.9) rotate(-100.6)"><path d="M24.0 0 C13.9 -2.1 9.3 -6.0 0 -6.0 C-13.9 -6.0 -15.5 -3.0 -15.5 0 C-15.5 3.0 -13.9 6.0 0 6.0 C9.3 6.0 13.9 2.1 24.0 0z" fill="url(#gspoon)" stroke="#14181c" stroke-width=".9"/>
<path d="M-3.1 -4.7 C-11.6 -4.8 -12.7 -1.8 -12.4 1.2 C-10.8 4.5 -4.6 4.8 1.5 4.5" fill="none" stroke="#eef2f7" stroke-width="2"/>
<path d="M-8.5 -3.3 L-14.7 -4.2 M-8.5 3.6 L-13.9 4.8" stroke="#14181c" stroke-width=".6"/>
</g>
<polygon points="1178.2,477.0 1167.5,564.5 1170.2,564.9 1184.5,477.9" fill="#a4afbe" stroke="#14181c" stroke-width="0.6" stroke-linejoin="round" />
<g transform="translate(1184.0,459.0) rotate(98.1)"><path d="M24.0 0 C13.9 -2.1 9.3 -6.0 0 -6.0 C-13.9 -6.0 -15.5 -3.0 -15.5 0 C-15.5 3.0 -13.9 6.0 0 6.0 C9.3 6.0 13.9 2.1 24.0 0z" fill="url(#gspoon)" stroke="#14181c" stroke-width=".9"/>
<path d="M-3.1 -4.7 C-11.6 -4.8 -12.7 -1.8 -12.4 1.2 C-10.8 4.5 -4.6 4.8 1.5 4.5" fill="none" stroke="#eef2f7" stroke-width="2"/>
<path d="M-8.5 -3.3 L-14.7 -4.2 M-8.5 3.6 L-13.9 4.8" stroke="#14181c" stroke-width=".6"/>
</g>
<polygon points="1194.9,812.8 1175.5,730.9 1172.7,731.4 1188.7,814.1" fill="#a4afbe" stroke="#14181c" stroke-width="0.6" stroke-linejoin="round" />
<g transform="translate(1195.7,831.6) rotate(-102.1)"><path d="M24.0 0 C13.9 -2.1 9.3 -6.1 0 -6.1 C-13.9 -6.1 -15.5 -3.0 -15.5 0 C-15.5 3.0 -13.9 6.1 0 6.1 C9.3 6.1 13.9 2.1 24.0 0z" fill="url(#gspoon)" stroke="#14181c" stroke-width=".9"/>
<path d="M-3.1 -4.7 C-11.6 -4.8 -12.7 -1.8 -12.4 1.2 C-10.8 4.5 -4.6 4.8 1.5 4.5" fill="none" stroke="#eef2f7" stroke-width="2"/>
<path d="M-8.5 -3.3 L-14.7 -4.2 M-8.5 3.6 L-13.9 4.8" stroke="#14181c" stroke-width=".6"/>
</g>
<polygon points="1185.4,489.0 1172.4,569.9 1175.2,570.4 1191.7,490.2" fill="#a4afbe" stroke="#14181c" stroke-width="0.6" stroke-linejoin="round" />
<g transform="translate(1191.9,471.4) rotate(100.4)"><path d="M23.8 0 C13.8 -2.8 9.2 -8.1 0 -8.1 C-13.8 -8.1 -15.4 -4.0 -15.4 0 C-15.4 4.0 -13.8 8.1 0 8.1 C9.2 8.1 13.8 2.8 23.8 0z" fill="url(#gspoon)" stroke="#14181c" stroke-width=".9"/>
<path d="M-3.1 -6.3 C-11.5 -6.4 -12.6 -2.4 -12.3 1.6 C-10.8 6.0 -4.6 6.4 1.5 6.0" fill="none" stroke="#eef2f7" stroke-width="2"/>
<path d="M-8.5 -4.4 L-14.6 -5.6 M-8.5 4.8 L-13.8 6.4" stroke="#14181c" stroke-width=".6"/>
</g>
<polygon points="1201.4,800.0 1180.1,725.0 1177.4,725.7 1195.2,801.6" fill="#a4afbe" stroke="#14181c" stroke-width="0.6" stroke-linejoin="round" />
<g transform="translate(1202.9,818.6) rotate(-104.5)"><path d="M23.8 0 C13.8 -2.8 9.2 -8.1 0 -8.1 C-13.8 -8.1 -15.4 -4.0 -15.4 0 C-15.4 4.0 -13.8 8.1 0 8.1 C9.2 8.1 13.8 2.8 23.8 0z" fill="url(#gspoon)" stroke="#14181c" stroke-width=".9"/>
<path d="M-3.1 -6.3 C-11.5 -6.5 -12.6 -2.4 -12.3 1.6 C-10.8 6.1 -4.6 6.5 1.5 6.1" fill="none" stroke="#eef2f7" stroke-width="2"/>
<path d="M-8.5 -4.4 L-14.6 -5.6 M-8.5 4.8 L-13.8 6.5" stroke="#14181c" stroke-width=".6"/>
</g>
<polygon points="1192.0,512.6 1177.1,580.6 1179.8,581.3 1198.2,514.2" fill="#a4afbe" stroke="#14181c" stroke-width="0.6" stroke-linejoin="round" />
<g transform="translate(1199.5,495.7) rotate(103.8)"><path d="M23.5 0 C13.7 -3.5 9.1 -9.9 0 -9.9 C-13.7 -9.9 -15.2 -4.9 -15.2 0 C-15.2 4.9 -13.7 9.9 0 9.9 C9.1 9.9 13.7 3.5 23.5 0z" fill="url(#gspoon)" stroke="#14181c" stroke-width=".9"/>
<path d="M-3.0 -7.7 C-11.4 -7.9 -12.5 -3.0 -12.2 2.0 C-10.6 7.4 -4.6 7.9 1.5 7.4" fill="none" stroke="#eef2f7" stroke-width="2"/>
<path d="M-8.4 -5.4 L-14.4 -6.9 M-8.4 5.9 L-13.7 7.9" stroke="#14181c" stroke-width=".6"/>
</g>
<polygon points="1206.2,775.6 1184.0,713.8 1181.3,714.6 1200.1,777.6" fill="#a4afbe" stroke="#14181c" stroke-width="0.6" stroke-linejoin="round" />
<g transform="translate(1208.9,793.9) rotate(-108.2)"><path d="M23.5 0 C13.7 -3.5 9.1 -9.9 0 -9.9 C-13.7 -9.9 -15.2 -4.9 -15.2 0 C-15.2 4.9 -13.7 9.9 0 9.9 C9.1 9.9 13.7 3.5 23.5 0z" fill="url(#gspoon)" stroke="#14181c" stroke-width=".9"/>
<path d="M-3.0 -7.7 C-11.4 -7.9 -12.5 -3.0 -12.2 2.0 C-10.6 7.4 -4.6 7.9 1.5 7.4" fill="none" stroke="#eef2f7" stroke-width="2"/>
<path d="M-8.4 -5.4 L-14.4 -6.9 M-8.4 5.9 L-13.7 7.9" stroke="#14181c" stroke-width=".6"/>
</g>
<polygon points="1197.1,546.0 1181.1,595.9 1183.8,596.8 1203.1,548.1" fill="#a4afbe" stroke="#14181c" stroke-width="0.6" stroke-linejoin="round" />
<g transform="translate(1206.1,530.2) rotate(109.7)"><path d="M23.1 0 C13.4 -4.0 8.9 -11.3 0 -11.3 C-13.4 -11.3 -14.9 -5.7 -14.9 0 C-14.9 5.7 -13.4 11.3 0 11.3 C8.9 11.3 13.4 4.0 23.1 0z" fill="url(#gspoon)" stroke="#14181c" stroke-width=".9"/>
<path d="M-3.0 -8.8 C-11.2 -9.1 -12.2 -3.4 -11.9 2.3 C-10.4 8.5 -4.5 9.1 1.5 8.5" fill="none" stroke="#eef2f7" stroke-width="2"/>
<path d="M-8.2 -6.2 L-14.2 -7.9 M-8.2 6.8 L-13.4 9.1" stroke="#14181c" stroke-width=".6"/>
</g>
<polygon points="1208.8,741.4 1187.0,698.0 1184.4,699.2 1203.0,744.0" fill="#a4afbe" stroke="#14181c" stroke-width="0.6" stroke-linejoin="round" />
<g transform="translate(1213.3,759.0) rotate(-114.6)"><path d="M23.1 0 C13.4 -4.0 8.9 -11.4 0 -11.4 C-13.4 -11.4 -14.9 -5.7 -14.9 0 C-14.9 5.7 -13.4 11.4 0 11.4 C8.9 11.4 13.4 4.0 23.1 0z" fill="url(#gspoon)" stroke="#14181c" stroke-width=".9"/>
<path d="M-3.0 -8.9 C-11.2 -9.1 -12.2 -3.4 -11.9 2.3 C-10.4 8.5 -4.5 9.1 1.5 8.5" fill="none" stroke="#eef2f7" stroke-width="2"/>
<path d="M-8.2 -6.2 L-14.2 -7.9 M-8.2 6.8 L-13.4 9.1" stroke="#14181c" stroke-width=".6"/>
</g>
<polygon points="1199.6,585.8 1184.3,614.5 1186.7,616.0 1205.0,589.2" fill="#a4afbe" stroke="#14181c" stroke-width="0.6" stroke-linejoin="round" />
<g transform="translate(1211.4,572.5) rotate(121.2)"><path d="M22.6 0 C13.1 -4.3 8.7 -12.4 0 -12.4 C-13.1 -12.4 -14.6 -6.2 -14.6 0 C-14.6 6.2 -13.1 12.4 0 12.4 C8.7 12.4 13.1 4.3 22.6 0z" fill="url(#gspoon)" stroke="#14181c" stroke-width=".9"/>
<path d="M-2.9 -9.7 C-10.9 -9.9 -12.0 -3.7 -11.7 2.5 C-10.2 9.3 -4.4 9.9 1.5 9.3" fill="none" stroke="#eef2f7" stroke-width="2"/>
<path d="M-8.0 -6.8 L-13.8 -8.7 M-8.0 7.4 L-13.1 9.9" stroke="#14181c" stroke-width=".6"/>
</g>
<polygon points="1207.8,700.5 1188.7,678.7 1186.4,680.4 1202.7,704.4" fill="#a4afbe" stroke="#14181c" stroke-width="0.6" stroke-linejoin="round" />
<g transform="translate(1215.9,716.3) rotate(-127.6)"><path d="M22.6 0 C13.1 -4.3 8.7 -12.4 0 -12.4 C-13.1 -12.4 -14.6 -6.2 -14.6 0 C-14.6 6.2 -13.1 12.4 0 12.4 C8.7 12.4 13.1 4.3 22.6 0z" fill="url(#gspoon)" stroke="#14181c" stroke-width=".9"/>
<path d="M-2.9 -9.7 C-10.9 -9.9 -11.9 -3.7 -11.7 2.5 C-10.2 9.3 -4.4 9.9 1.5 9.3" fill="none" stroke="#eef2f7" stroke-width="2"/>
<path d="M-8.0 -6.8 L-13.8 -8.7 M-8.0 7.4 L-13.1 9.9" stroke="#14181c" stroke-width=".6"/>
</g>
<polygon points="1198.6,625.9 1186.8,635.2 1188.2,637.6 1201.9,631.4" fill="#a4afbe" stroke="#14181c" stroke-width="0.6" stroke-linejoin="round" />
<g transform="translate(1214.9,619.8) rotate(148.9)"><path d="M22.0 0 C12.8 -4.5 8.5 -12.9 0 -12.9 C-12.8 -12.9 -14.2 -6.5 -14.2 0 C-14.2 6.5 -12.8 12.9 0 12.9 C8.5 12.9 12.8 4.5 22.0 0z" fill="url(#gspoon)" stroke="#14181c" stroke-width=".9"/>
<path d="M-2.8 -10.1 C-10.6 -10.3 -11.6 -3.9 -11.4 2.6 C-9.9 9.7 -4.3 10.3 1.4 9.7" fill="none" stroke="#eef2f7" stroke-width="2"/>
<path d="M-7.8 -7.1 L-13.5 -9.1 M-7.8 7.8 L-12.8 10.3" stroke="#14181c" stroke-width=".6"/>
</g>
<polygon points="1201.6,659.9 1188.7,657.0 1187.7,659.6 1199.4,665.9" fill="#a4afbe" stroke="#14181c" stroke-width="0.6" stroke-linejoin="round" />
<g transform="translate(1216.4,668.9) rotate(-159.4)"><path d="M22.0 0 C12.8 -4.5 8.5 -12.9 0 -12.9 C-12.8 -12.9 -14.2 -6.5 -14.2 0 C-14.2 6.5 -12.8 12.9 0 12.9 C8.5 12.9 12.8 4.5 22.0 0z" fill="url(#gspoon)" stroke="#14181c" stroke-width=".9"/>
<path d="M-2.8 -10.1 C-10.6 -10.3 -11.6 -3.9 -11.4 2.6 C-9.9 9.7 -4.3 10.3 1.4 9.7" fill="none" stroke="#eef2f7" stroke-width="2"/>
<path d="M-7.8 -7.1 L-13.5 -9.1 M-7.8 7.8 L-12.8 10.3" stroke="#14181c" stroke-width=".6"/>
</g>
<ellipse cx="1166.2" cy="580.0" rx="0.8" ry="2" fill="#5a4000" stroke="none" stroke-width="0" />
<ellipse cx="1156.2" cy="616.2" rx="0.8" ry="2" fill="#5a4000" stroke="none" stroke-width="0" />
<ellipse cx="1178.8" cy="611.2" rx="0.8" ry="2" fill="#5a4000" stroke="none" stroke-width="0" />
<ellipse cx="1169.5" cy="648.0" rx="0.8" ry="2" fill="#5a4000" stroke="none" stroke-width="0" />
<ellipse cx="1160.0" cy="684.5" rx="0.8" ry="2" fill="#5a4000" stroke="none" stroke-width="0" />
<ellipse cx="1182.5" cy="680.0" rx="0.8" ry="2" fill="#5a4000" stroke="none" stroke-width="0" />
<ellipse cx="1173.0" cy="716.2" rx="0.8" ry="2" fill="#5a4000" stroke="none" stroke-width="0" />
<polygon points="1130.0,314.5 1229.5,310.0 1320.0,533.8 1221.2,538.8 1207.5,502.5 1243.8,497.5 1184.5,352.5 1146.2,351.2" fill="#94a1b2" stroke="#14181c" stroke-width="0.8" stroke-linejoin="round" />
<polygon points="1130.0,314.5 1146.2,351.2 1145.0,387.5 1137.5,406.2 1126.2,381.2" fill="#8c98a8" stroke="#14181c" stroke-width="0.8" stroke-linejoin="round" />
<ellipse cx="1135.5" cy="364.5" rx="4.3" ry="22" fill="url(#ghole)" stroke="#14181c" stroke-width="0.8" />
<polygon points="1145.0,387.0 1182.5,392.5 1178.8,413.8 1137.5,406.2" fill="url(#gcyl)" stroke="#14181c" stroke-width="0.8" stroke-linejoin="round" />
<polygon points="1146.2,351.2 1184.5,352.5 1182.5,392.5 1145.0,387.0" fill="#cf8a00" stroke="#14181c" stroke-width="0.8" stroke-linejoin="round" />
<polygon points="1221.2,538.8 1320.0,533.8 1295.6,979.6 1196.4,983.4 1200.7,914.5 1238.7,905.2 1247.5,737.8 1255.0,612.5 1218.8,605.0" fill="#7f8a97" stroke="#14181c" stroke-width="0.8" stroke-linejoin="round" />
<polygon points="1207.5,502.5 1221.2,538.8 1218.8,605.0 1205.0,570.0" fill="#8c98a8" stroke="#14181c" stroke-width="0.8" stroke-linejoin="round" />
<ellipse cx="1213.2" cy="555.0" rx="5" ry="23" fill="url(#ghole)" stroke="#14181c" stroke-width="0.8" />
<polygon points="1187.6,892.0 1200.7,914.5 1196.4,983.4 1181.8,947.5" fill="#8c98a8" stroke="#14181c" stroke-width="0.8" stroke-linejoin="round" />
<ellipse cx="1191.4" cy="934.4" rx="5.2" ry="22.5" fill="url(#ghole)" stroke="#14181c" stroke-width="0.8" />
<polygon points="1196.4,902.3 1228.5,889.1 1238.7,905.2 1200.7,914.5" fill="#f0a200" stroke="#14181c" stroke-width="0.8" stroke-linejoin="round" />
<polygon points="1187.6,892.0 1227.0,881.2 1229.1,889.1 1196.4,902.3" fill="#8a95a4" stroke="#14181c" stroke-width="0.8" stroke-linejoin="round" />
<polygon points="1107.5,692.5 1142.5,690.0 1147.5,705.0 1121.2,705.5" fill="#f0a200" stroke="#14181c" stroke-width="0.8" stroke-linejoin="round" />
<polygon points="1107.5,692.5 1121.2,705.0 1121.2,795.0 1105.0,760.0" fill="#8c98a8" stroke="#14181c" stroke-width="0.8" stroke-linejoin="round" />
<ellipse cx="1113.2" cy="743.8" rx="5.5" ry="25" fill="url(#ghole)" stroke="#14181c" stroke-width="0.8" />
<polygon points="1121.2,705.0 1145.0,702.5 1150.0,757.5 1121.2,761.2" fill="url(#gcyl)" stroke="#14181c" stroke-width="0.8" stroke-linejoin="round" />
<polygon points="1121.2,761.2 1150.0,757.5 1160.0,797.5 1121.2,795.0" fill="#cf8a00" stroke="#14181c" stroke-width="0.8" stroke-linejoin="round" />
<polygon points="1229.5,310.0 1336.2,305.0 1356.2,351.2 1248.8,357.0" fill="#94a1b2" stroke="#14181c" stroke-width="0.8" stroke-linejoin="round" />
<polygon points="1248.8,357.0 1313.8,358.0 1307.0,487.0 1302.0,487.5" fill="#7f8a97" stroke="#14181c" stroke-width="0.8" stroke-linejoin="round" />
<polygon points="1313.8,358.0 1362.5,482.5 1307.0,487.0" fill="#8c98a8" stroke="#14181c" stroke-width="0.8" stroke-linejoin="round" />
<ellipse cx="1324.2" cy="408.8" rx="2.5" ry="10" fill="url(#ghole)" stroke="#14181c" stroke-width="0.8" />
<ellipse cx="1350.8" cy="473.8" rx="2.3" ry="9.5" fill="url(#ghole)" stroke="#14181c" stroke-width="0.8" />
<polygon points="1313.8,358.0 1333.8,357.5 1382.5,480.0 1362.5,482.5" fill="#94a1b2" stroke="#14181c" stroke-width="0.8" stroke-linejoin="round" />
<polygon points="1333.8,357.5 1356.2,356.2 1408.0,478.0 1382.5,479.5" fill="#94a1b2" stroke="#14181c" stroke-width="0.8" stroke-linejoin="round" />
<polygon points="1356.2,351.2 1356.2,356.2 1333.8,357.5 1313.8,358.0 1248.8,357.0" fill="#8c98a8" stroke="#14181c" stroke-width="0.5" stroke-linejoin="round" />
<polygon points="1362.5,480.0 1408.0,477.5 1408.8,482.5 1363.0,485.0" fill="#7f8a97" stroke="#14181c" stroke-width="0.8" stroke-linejoin="round" />
<polygon points="1302.0,487.5 1408.8,482.5 1428.8,528.8 1320.0,533.8" fill="#94a1b2" stroke="#14181c" stroke-width="0.8" stroke-linejoin="round" />
<polygon points="1320.0,533.8 1428.8,528.8 1403.6,975.3 1295.6,979.6" fill="#7f8a97" stroke="#14181c" stroke-width="0.8" stroke-linejoin="round" />
<polygon points="1338.8,282.0 1368.2,280.8 1460.0,505.0 1430.0,507.0" fill="#94a1b2" stroke="#14181c" stroke-width="0.8" stroke-linejoin="round" />
<polygon points="1338.8,282.0 1430.0,507.0 1428.8,528.8 1336.2,305.0" fill="#8c98a8" stroke="#14181c" stroke-width="0.8" stroke-linejoin="round" />
<polygon points="1430.0,507.0 1460.0,505.0 1432.8,995.1 1402.2,996.3 1393.4,975.3 1403.6,975.3 1428.8,528.8" fill="#7f8a97" stroke="#14181c" stroke-width="0.8" stroke-linejoin="round" />
<polygon points="1393.4,975.3 1403.6,975.3 1402.2,996.3" fill="#8c98a8" stroke="#14181c" stroke-width="0.8" stroke-linejoin="round" />
<polygon points="742.5,413.8 749.5,412.0 764.5,445.0 767.0,458.8 766.2,472.5" fill="#ffffff" stroke="#14181c" stroke-width="0.5" stroke-linejoin="round" />
<polygon points="763.0,445.0 803.8,443.0 807.0,455.0 767.0,458.0" fill="#ffffff" stroke="#14181c" stroke-width="0.6" stroke-linejoin="round" />
<ellipse cx="785.0" cy="449.5" rx="8.5" ry="3.6" fill="#dfe4f4" stroke="#14181c" stroke-width="0.6" />
<polygon points="767.0,458.0 807.0,455.0 806.2,468.8 766.8,472.5" fill="#e9edfb" stroke="#14181c" stroke-width="0.5" stroke-linejoin="round" />
<polygon points="788.0,471.2 790.0,470.0 798.8,476.2 812.5,477.0 961.2,471.2 976.2,470.0 976.2,482.5 970.0,488.8 961.2,491.2 950.0,492.5 948.8,490.0 812.5,497.0 801.2,496.2 791.2,490.0 787.5,481.2" fill="#7f8a97" stroke="#14181c" stroke-width="0.8" stroke-linejoin="round" />
<polygon points="788.0,471.2 798.8,476.2 812.5,477.0 812.5,497.0 801.2,496.2 791.2,490.0 787.5,481.2" fill="url(#gend)" stroke="#14181c" stroke-width="0.6" stroke-linejoin="round" />
<polygon points="961.2,471.2 976.2,470.0 976.2,482.5 970.0,488.8 961.2,491.2" fill="url(#gend)" stroke="#14181c" stroke-width="0.6" stroke-linejoin="round" />
<polygon points="790.0,470.0 792.5,462.5 801.2,458.8 955.0,451.2 970.0,454.5 977.5,462.5 976.2,470.0 961.2,471.2 812.5,477.0 798.8,476.2" fill="#94a1b2" stroke="#14181c" stroke-width="0.8" stroke-linejoin="round" />
<path d="M809.5 461.5 L926.2 456.5 a6.500 5.200 0 0 1 0.500 10.400 L810.5 472.0 a6.500 5.200 0 0 1 -1 -10.500z" fill="#7f8a97" stroke="#14181c" stroke-width=".7"/>
<path d="M918.8 457.0 L926.2 456.5 a6.500 5.200 0 0 1 0.500 10.400 L918.8 467.0z" fill="#a3aebd" stroke="#14181c" stroke-width=".6"/>
<polyline points="813.8,463.8 813.8,471.5" fill="none" stroke="#14181c" stroke-width="0.6" />
<ellipse cx="960.0" cy="460.8" rx="11" ry="5.5" fill="url(#ghole)" stroke="#14181c" stroke-width="0.7" />
<polygon points="915.0,336.2 928.8,371.2 925.0,437.0 915.0,412.5" fill="#00f400" stroke="#14181c" stroke-width="0.7" stroke-linejoin="round" />
<polygon points="805.0,360.5 927.5,355.0 927.5,415.0 805.0,421.2" fill="url(#gbar)" stroke="#14181c" stroke-width="0.6" stroke-linejoin="round" />
<polyline points="805.0,406.2 925.0,400.0" fill="none" stroke="#14181c" stroke-width="0.7" />
<polygon points="798.8,351.2 916.2,346.2 917.5,355.0 801.2,360.0" fill="#ff9efc" stroke="#c060c0" stroke-width="0.5" stroke-linejoin="round" />
<polyline points="800.5,357.4 916.9,352.4" fill="none" stroke="#d070d0" stroke-width="0.7" />
<polygon points="806.2,376.2 926.2,370.0 926.2,380.0 807.5,386.2" fill="#ff9efc" stroke="#c060c0" stroke-width="0.5" stroke-linejoin="round" />
<polyline points="807.4,383.2 926.2,377.0" fill="none" stroke="#d070d0" stroke-width="0.7" />
<polygon points="805.0,422.5 923.8,416.2 923.8,427.0 804.5,432.5" fill="#ff9efc" stroke="#c060c0" stroke-width="0.5" stroke-linejoin="round" />
<polyline points="805.2,429.5 923.8,423.8" fill="none" stroke="#d070d0" stroke-width="0.7" />
<polygon points="751.2,343.8 766.2,378.8 763.0,445.0 748.0,410.0" fill="#00f400" stroke="#14181c" stroke-width="0.7" stroke-linejoin="round" />
<polygon points="751.2,343.8 792.5,341.2 807.0,376.2 766.2,378.8" fill="#00f400" stroke="#14181c" stroke-width="0.7" stroke-linejoin="round" />
<polygon points="766.2,378.8 807.0,376.2 803.8,442.5 763.0,445.0" fill="#00d400" stroke="#14181c" stroke-width="0.7" stroke-linejoin="round" />
<polygon points="742.0,377.0 760.0,376.2 760.0,412.5 742.5,413.0" fill="url(#grod)" stroke="#14181c" stroke-width="0.7" stroke-linejoin="round" />
<ellipse cx="742.0" cy="395.0" rx="3" ry="18" fill="#00e000" stroke="#14181c" stroke-width="0.7" />
<polyline points="745.5,403.8 760.0,403.0" fill="none" stroke="#14181c" stroke-width="0.6" />
<ellipse cx="760.0" cy="394.5" rx="3" ry="18" fill="none" stroke="#14181c" stroke-width="0.6" />
<polygon points="679.5,386.5 742.5,383.8 742.5,407.0 679.5,408.8" fill="url(#grod)" stroke="#14181c" stroke-width="0.7" stroke-linejoin="round" />
<polygon points="649.5,390.0 679.5,388.8 679.5,408.0 649.5,408.8" fill="url(#grod)" stroke="#14181c" stroke-width="0.7" stroke-linejoin="round" />
<ellipse cx="649.0" cy="399.2" rx="2.6" ry="9.4" fill="#00e800" stroke="#14181c" stroke-width="0.7" />
<ellipse cx="650.5" cy="399.2" rx="1.6" ry="7.5" fill="#00d000" stroke="#14181c" stroke-width="0.5" />
<ellipse cx="679.5" cy="397.5" rx="2.5" ry="11" fill="none" stroke="#14181c" stroke-width="0.8" />
<polygon points="915.0,336.2 952.5,334.5 962.5,368.8 928.8,371.2" fill="#00f400" stroke="#14181c" stroke-width="0.7" stroke-linejoin="round" />
<polygon points="928.8,371.2 962.5,368.8 960.0,435.0 925.0,437.0" fill="#00d400" stroke="#14181c" stroke-width="0.7" stroke-linejoin="round" />
<polygon points="776.0,344.8 784.0,344.2 788.0,361.8 780.0,364.8 772.0,362.2" fill="#f2dc00" stroke="#806800" stroke-width="0.6" stroke-linejoin="round" />
<ellipse cx="780.0" cy="348.8" rx="4.5" ry="1.6" fill="none" stroke="#806800" stroke-width="0.6" />
<ellipse cx="780.0" cy="352.8" rx="5.6" ry="1.6" fill="none" stroke="#806800" stroke-width="0.6" />
<ellipse cx="780.0" cy="356.8" rx="6.7" ry="1.6" fill="none" stroke="#806800" stroke-width="0.6" />
<ellipse cx="780.0" cy="360.8" rx="7.800000000000001" ry="1.6" fill="none" stroke="#806800" stroke-width="0.6" />
<polygon points="939.8,336.8 947.8,336.2 951.8,353.8 943.8,356.8 935.8,354.2" fill="#f2dc00" stroke="#806800" stroke-width="0.6" stroke-linejoin="round" />
<ellipse cx="943.8" cy="340.8" rx="4.5" ry="1.6" fill="none" stroke="#806800" stroke-width="0.6" />
<ellipse cx="943.8" cy="344.8" rx="5.6" ry="1.6" fill="none" stroke="#806800" stroke-width="0.6" />
<ellipse cx="943.8" cy="348.8" rx="6.7" ry="1.6" fill="none" stroke="#806800" stroke-width="0.6" />
<ellipse cx="943.8" cy="352.8" rx="7.800000000000001" ry="1.6" fill="none" stroke="#806800" stroke-width="0.6" />
<g transform="translate(891.0,645.0) rotate(2.9)"><path d="M26.4 0 C15.3 -5.6 10.2 -16.0 0 -16.0 C-15.3 -16.0 -17.0 -8.0 -17.0 0 C-17.0 8.0 -15.3 16.0 0 16.0 C10.2 16.0 15.3 5.6 26.4 0z" fill="url(#gspoon)" stroke="#14181c" stroke-width=".9"/>
<path d="M-3.4 -12.5 C-12.8 -12.8 -13.9 -4.8 -13.6 3.2 C-11.9 12.0 -5.1 12.8 1.7 12.0" fill="none" stroke="#eef2f7" stroke-width="2"/>
<path d="M-9.4 -8.8 L-16.1 -11.2 M-9.4 9.6 L-15.3 12.8" stroke="#14181c" stroke-width=".6"/>
<path d="M19.8 0 C14.4 -3.9 10.9 -11.2 3.7 -11.2 C-7.0 -11.2 -8.2 -5.6 -8.2 0 C-8.2 5.6 -7.0 11.2 3.7 11.2 C10.9 11.2 14.4 3.9 19.8 0z" fill="#a7b2c2" stroke="#14181c" stroke-width="1.300"/>
<path d="M19.5 -1.9 L29.8 -3.5 L29.8 4.8 L20.4 3.5z" fill="#8f9aaa" stroke="#14181c" stroke-width=".8"/>
<path d="M16.1 4.8 L22.1 0.8 L21.2 4.8z" fill="#101418"/>
<path d="M8.5 0 L18.7 0.8" stroke="#2fbff0" stroke-width=".9"/>
<path d="M-16.1 -1.6 L-8.5 -1.3" stroke="#14181c" stroke-width=".9"/>
</g>
<g transform="translate(893.0,690.0) rotate(-5.7)"><path d="M26.4 0 C15.3 -5.6 10.2 -16.0 0 -16.0 C-15.3 -16.0 -17.0 -8.0 -17.0 0 C-17.0 8.0 -15.3 16.0 0 16.0 C10.2 16.0 15.3 5.6 26.4 0z" fill="url(#gspoon)" stroke="#14181c" stroke-width=".9"/>
<path d="M-3.4 -12.5 C-12.8 -12.8 -13.9 -4.8 -13.6 3.2 C-11.9 12.0 -5.1 12.8 1.7 12.0" fill="none" stroke="#eef2f7" stroke-width="2"/>
<path d="M-9.4 -8.8 L-16.1 -11.2 M-9.4 9.6 L-15.3 12.8" stroke="#14181c" stroke-width=".6"/>
<path d="M19.8 0 C14.4 -3.9 10.9 -11.2 3.7 -11.2 C-7.0 -11.2 -8.2 -5.6 -8.2 0 C-8.2 5.6 -7.0 11.2 3.7 11.2 C10.9 11.2 14.4 3.9 19.8 0z" fill="#a7b2c2" stroke="#14181c" stroke-width="1.300"/>
<path d="M19.5 -1.9 L29.8 -3.5 L29.8 4.8 L20.4 3.5z" fill="#8f9aaa" stroke="#14181c" stroke-width=".8"/>
<path d="M16.1 4.8 L22.1 0.8 L21.2 4.8z" fill="#101418"/>
<path d="M8.5 0 L18.7 0.8" stroke="#2fbff0" stroke-width=".9"/>
<path d="M-16.1 -1.6 L-8.5 -1.3" stroke="#14181c" stroke-width=".9"/>
</g>
<g transform="translate(897.0,734.5) rotate(-24.2)"><path d="M26.4 0 C15.3 -5.2 10.2 -15.0 0 -15.0 C-15.3 -15.0 -17.0 -7.5 -17.0 0 C-17.0 7.5 -15.3 15.0 0 15.0 C10.2 15.0 15.3 5.2 26.4 0z" fill="url(#gspoon)" stroke="#14181c" stroke-width=".9"/>
<path d="M-3.4 -11.7 C-12.8 -12.0 -13.9 -4.5 -13.6 3.0 C-11.9 11.2 -5.1 12.0 1.7 11.2" fill="none" stroke="#eef2f7" stroke-width="2"/>
<path d="M-9.4 -8.2 L-16.1 -10.5 M-9.4 9.0 L-15.3 12.0" stroke="#14181c" stroke-width=".6"/>
<path d="M19.8 0 C14.4 -3.7 10.9 -10.5 3.7 -10.5 C-7.0 -10.5 -8.2 -5.2 -8.2 0 C-8.2 5.2 -7.0 10.5 3.7 10.5 C10.9 10.5 14.4 3.7 19.8 0z" fill="#a7b2c2" stroke="#14181c" stroke-width="1.300"/>
<path d="M19.5 -1.8 L29.8 -3.3 L29.8 4.5 L20.4 3.3z" fill="#8f9aaa" stroke="#14181c" stroke-width=".8"/>
<path d="M16.1 4.5 L22.1 0.8 L21.2 4.5z" fill="#101418"/>
<path d="M8.5 0 L18.7 0.8" stroke="#2fbff0" stroke-width=".9"/>
<path d="M-16.1 -1.5 L-8.5 -1.2" stroke="#14181c" stroke-width=".9"/>
</g>
<g transform="translate(905.0,773.0) rotate(-38.7)"><path d="M26.4 0 C15.3 -3.8 10.2 -11.0 0 -11.0 C-15.3 -11.0 -17.0 -5.5 -17.0 0 C-17.0 5.5 -15.3 11.0 0 11.0 C10.2 11.0 15.3 3.8 26.4 0z" fill="url(#gspoon)" stroke="#14181c" stroke-width=".9"/>
<path d="M-3.4 -8.6 C-12.8 -8.8 -13.9 -3.3 -13.6 2.2 C-11.9 8.2 -5.1 8.8 1.7 8.2" fill="none" stroke="#eef2f7" stroke-width="2"/>
<path d="M-9.4 -6.1 L-16.1 -7.7 M-9.4 6.6 L-15.3 8.8" stroke="#14181c" stroke-width=".6"/>
<path d="M19.8 0 C14.4 -2.7 10.9 -7.7 3.7 -7.7 C-7.0 -7.7 -8.2 -3.8 -8.2 0 C-8.2 3.8 -7.0 7.7 3.7 7.7 C10.9 7.7 14.4 2.7 19.8 0z" fill="#a7b2c2" stroke="#14181c" stroke-width="1.300"/>
<path d="M19.5 -1.3 L29.8 -2.4 L29.8 3.3 L20.4 2.4z" fill="#8f9aaa" stroke="#14181c" stroke-width=".8"/>
<path d="M16.1 3.3 L22.1 0.6 L21.2 3.3z" fill="#101418"/>
<path d="M8.5 0 L18.7 0.6" stroke="#2fbff0" stroke-width=".9"/>
<path d="M-16.1 -1.1 L-8.5 -0.9" stroke="#14181c" stroke-width=".9"/>
</g>
<g transform="translate(913.5,806.0) rotate(-51.3)"><path d="M24.8 0 C14.4 -2.8 9.6 -8.0 0 -8.0 C-14.4 -8.0 -16.0 -4.0 -16.0 0 C-16.0 4.0 -14.4 8.0 0 8.0 C9.6 8.0 14.4 2.8 24.8 0z" fill="url(#gspoon)" stroke="#14181c" stroke-width=".9"/>
<path d="M-3.2 -6.2 C-12.0 -6.4 -13.1 -2.4 -12.8 1.6 C-11.2 6.0 -4.8 6.4 1.6 6.0" fill="none" stroke="#eef2f7" stroke-width="2"/>
<path d="M-8.8 -4.4 L-15.2 -5.6 M-8.8 4.8 L-14.4 6.4" stroke="#14181c" stroke-width=".6"/>
<path d="M18.6 0 C13.6 -2.0 10.2 -5.6 3.5 -5.6 C-6.6 -5.6 -7.7 -2.8 -7.7 0 C-7.7 2.8 -6.6 5.6 3.5 5.6 C10.2 5.6 13.6 2.0 18.6 0z" fill="#a7b2c2" stroke="#14181c" stroke-width="1.300"/>
<path d="M18.4 -1.0 L28.0 -1.8 L28.0 2.4 L19.2 1.8z" fill="#8f9aaa" stroke="#14181c" stroke-width=".8"/>
<path d="M15.2 2.4 L20.8 0.4 L20.0 2.4z" fill="#101418"/>
<path d="M8.0 0 L17.6 0.4" stroke="#2fbff0" stroke-width=".9"/>
<path d="M-15.2 -0.8 L-8.0 -0.6" stroke="#14181c" stroke-width=".9"/>
</g>
<g transform="translate(921.6,830.0) rotate(-59.0)"><path d="M23.2 0 C13.5 -2.1 9.0 -6.0 0 -6.0 C-13.5 -6.0 -15.0 -3.0 -15.0 0 C-15.0 3.0 -13.5 6.0 0 6.0 C9.0 6.0 13.5 2.1 23.2 0z" fill="url(#gspoon)" stroke="#14181c" stroke-width=".9"/>
<path d="M-3.0 -4.7 C-11.2 -4.8 -12.3 -1.8 -12.0 1.2 C-10.5 4.5 -4.5 4.8 1.5 4.5" fill="none" stroke="#eef2f7" stroke-width="2"/>
<path d="M-8.2 -3.3 L-14.2 -4.2 M-8.2 3.6 L-13.5 4.8" stroke="#14181c" stroke-width=".6"/>
</g>
<g transform="translate(930.0,842.0) rotate(-63.4)"><path d="M20.2 0 C11.7 -1.4 7.8 -4.0 0 -4.0 C-11.7 -4.0 -13.0 -2.0 -13.0 0 C-13.0 2.0 -11.7 4.0 0 4.0 C7.8 4.0 11.7 1.4 20.2 0z" fill="url(#gspoon)" stroke="#14181c" stroke-width=".9"/>
<path d="M-2.6 -3.1 C-9.8 -3.2 -10.7 -1.2 -10.4 0.8 C-9.1 3.0 -3.9 3.2 1.3 3.0" fill="none" stroke="#eef2f7" stroke-width="2"/>
<path d="M-7.2 -2.2 L-12.3 -2.8 M-7.2 2.4 L-11.7 3.2" stroke="#14181c" stroke-width=".6"/>
</g>
<polygon points="850.0,688.0 867.0,690.0 866.0,775.0 862.0,792.0 848.0,846.0 842.0,852.0 846.0,760.0" fill="#8791a0" stroke="#14181c" stroke-width="0.6" stroke-linejoin="round" />
<polygon points="851.0,700.0 862.0,698.0 860.0,712.0 851.0,716.0" fill="#cf8a00" stroke="none" stroke-width="0" stroke-linejoin="round" />
<polygon points="848.0,790.0 853.0,788.0 850.0,800.0 847.0,803.0" fill="#cf8a00" stroke="none" stroke-width="0" stroke-linejoin="round" />
<ellipse cx="858.0" cy="692.0" rx="9" ry="12" fill="#8d98a8" stroke="#14181c" stroke-width="0.9" transform="rotate(20 858.0 692.0)" />
<ellipse cx="861.0" cy="693.0" rx="4.5" ry="9.0" fill="#6c7684" stroke="#14181c" stroke-width="0.7" transform="rotate(20 861.0 693.0)" />
<ellipse cx="858.0" cy="728.0" rx="9" ry="15" fill="#8d98a8" stroke="#14181c" stroke-width="0.9" transform="rotate(18 858.0 728.0)" />
<ellipse cx="861.0" cy="729.0" rx="4.5" ry="11.25" fill="#6c7684" stroke="#14181c" stroke-width="0.7" transform="rotate(18 861.0 729.0)" />
<ellipse cx="856.0" cy="765.0" rx="8" ry="15" fill="#8d98a8" stroke="#14181c" stroke-width="0.9" transform="rotate(20 856.0 765.0)" />
<ellipse cx="859.0" cy="766.0" rx="4.0" ry="11.25" fill="#6c7684" stroke="#14181c" stroke-width="0.7" transform="rotate(20 859.0 766.0)" />
<ellipse cx="853.0" cy="798.0" rx="7" ry="15" fill="#8d98a8" stroke="#14181c" stroke-width="0.9" transform="rotate(22 853.0 798.0)" />
<ellipse cx="856.0" cy="799.0" rx="3.5" ry="11.25" fill="#6c7684" stroke="#14181c" stroke-width="0.7" transform="rotate(22 856.0 799.0)" />
<ellipse cx="849.0" cy="828.0" rx="6" ry="14" fill="#8d98a8" stroke="#14181c" stroke-width="0.9" transform="rotate(25 849.0 828.0)" />
<ellipse cx="852.0" cy="829.0" rx="3.0" ry="10.5" fill="#6c7684" stroke="#14181c" stroke-width="0.7" transform="rotate(25 852.0 829.0)" />
<polyline points="851.0,742.0 862.0,728.0" fill="none" stroke="#4060ff" stroke-width="1.2" />
<polyline points="937.5,655.0 922.5,625.0" fill="none" stroke="#1a1e24" stroke-width="3.6" />
<polyline points="937.5,655.0 922.5,625.0" fill="none" stroke="#8f9aaa" stroke-width="2.2" />
<polyline points="937.5,655.0 946.2,632.5" fill="none" stroke="#1a1e24" stroke-width="3.6" />
<polyline points="937.5,655.0 946.2,632.5" fill="none" stroke="#8f9aaa" stroke-width="2.2" />
<polyline points="937.5,655.0 926.2,690.0" fill="none" stroke="#1a1e24" stroke-width="3.6" />
<polyline points="937.5,655.0 926.2,690.0" fill="none" stroke="#8f9aaa" stroke-width="2.2" />
<polyline points="937.5,655.0 947.5,690.0" fill="none" stroke="#1a1e24" stroke-width="3.6" />
<polyline points="937.5,655.0 947.5,690.0" fill="none" stroke="#8f9aaa" stroke-width="2.2" />
<polyline points="937.5,655.0 933.8,590.0" fill="none" stroke="#1a1e24" stroke-width="3.6" />
<polyline points="937.5,655.0 933.8,590.0" fill="none" stroke="#8f9aaa" stroke-width="2.2" />
<polyline points="933.8,590.0 917.5,512.5" fill="none" stroke="#3a4350" stroke-width="2.2" />
<polyline points="933.8,590.0 917.5,512.5" fill="none" stroke="#aab5c4" stroke-width="1" />
<polyline points="935.0,590.0 928.8,510.0" fill="none" stroke="#3a4350" stroke-width="1.6" />
<polyline points="935.0,590.0 928.8,510.0" fill="none" stroke="#aab5c4" stroke-width="0.7" />
<polyline points="935.0,732.5 932.5,810.0" fill="none" stroke="#3a4350" stroke-width="2.2" />
<polyline points="935.0,732.5 932.5,810.0" fill="none" stroke="#aab5c4" stroke-width="1" />
<polyline points="942.5,735.0 940.0,812.5" fill="none" stroke="#3a4350" stroke-width="1.8" />
<polyline points="942.5,735.0 940.0,812.5" fill="none" stroke="#aab5c4" stroke-width="0.8" />
<polygon points="881.2,505.5 883.8,515.0 891.2,526.2 902.5,536.2 912.5,540.0 913.8,536.2 905.0,525.0 897.5,512.5 891.2,505.0 885.0,502.5" fill="#a9b4c4" stroke="#14181c" stroke-width="0.8" stroke-linejoin="round" />
<polyline points="883.0,507.5 886.2,516.2 893.8,526.2 903.8,535.0" fill="none" stroke="#f2f5f9" stroke-width="2.2" />
<polygon points="893.8,494.5 900.0,502.5 910.0,510.0 920.0,514.5 922.5,511.2 915.0,502.5 905.0,495.5 897.5,492.5" fill="#a9b4c4" stroke="#14181c" stroke-width="0.8" stroke-linejoin="round" />
<polyline points="895.5,495.5 901.2,502.0 911.2,509.2" fill="none" stroke="#f2f5f9" stroke-width="2" />
<path d="M865.0 700.0 C870.0 815.0 897.5 880.0 935.0 850.0" fill="none" stroke="#14181c" stroke-width=".7"/>
<path d="M872.5 700.0 C877.5 810.0 902.5 870.0 932.5 842.5" fill="none" stroke="#14181c" stroke-width=".7"/>
<ellipse cx="937.0" cy="520.0" rx="3" ry="15" fill="none" stroke="#2fbff0" stroke-width="0.8" />
<ellipse cx="955.0" cy="565.0" rx="5.5" ry="26" fill="none" stroke="#2fbff0" stroke-width="0.8" />
<ellipse cx="955.0" cy="565.0" rx="3.5" ry="20" fill="none" stroke="#2fbff0" stroke-width="0.8" />
<ellipse cx="930.0" cy="497.5" rx="2" ry="7" fill="none" stroke="#2fbff0" stroke-width="0.8" />
<ellipse cx="872.5" cy="797.5" rx="3.5" ry="17.5" fill="none" stroke="#2fbff0" stroke-width="0.8" />
<ellipse cx="881.2" cy="827.5" rx="2" ry="10" fill="none" stroke="#2fbff0" stroke-width="0.8" />
<ellipse cx="907.5" cy="892.5" rx="2" ry="10" fill="none" stroke="#2fbff0" stroke-width="0.8" />
<ellipse cx="916.2" cy="902.5" rx="3.5" ry="17" fill="none" stroke="#2fbff0" stroke-width="0.8" />
<ellipse cx="932.5" cy="945.0" rx="5.5" ry="27" fill="none" stroke="#2fbff0" stroke-width="0.8" />
<ellipse cx="932.5" cy="945.0" rx="3.5" ry="21" fill="none" stroke="#2fbff0" stroke-width="0.8" />
<ellipse cx="895.0" cy="433.8" rx="2" ry="4.5" fill="none" stroke="#2fbff0" stroke-width="0.8" />
<ellipse cx="902.5" cy="432.5" rx="2" ry="4.5" fill="none" stroke="#2fbff0" stroke-width="0.8" />
<ellipse cx="933.8" cy="871.2" rx="2" ry="10" fill="#8f9bab" stroke="#6f7a88" stroke-width="0.6" />
<ellipse cx="947.5" cy="620.0" rx="2" ry="10" fill="#8f9bab" stroke="#6f7a88" stroke-width="0.6" />
<polygon points="1022.5,508.0 1296.0,496.5 1301.0,514.0 1030.0,527.0" fill="none" stroke="#2fbff0" stroke-width="0.9" stroke-linejoin="round" />
<ellipse cx="1043.0" cy="516.5" rx="6.5" ry="3.2" fill="none" stroke="#2fbff0" stroke-width="0.8" />
<ellipse cx="1082.0" cy="515.0" rx="7" ry="3.5" fill="none" stroke="#2fbff0" stroke-width="0.8" />
<polygon points="843.8,830.0 863.8,830.0 878.8,847.5 843.8,850.5" fill="#94a1b2" stroke="#14181c" stroke-width="0.6" stroke-linejoin="round" />
<polygon points="843.8,850.5 878.8,847.5 886.2,868.0 842.5,870.5" fill="#7f8a97" stroke="#14181c" stroke-width="0.6" stroke-linejoin="round" />
<polygon points="842.5,871.2 885.0,868.8 905.0,916.2 898.8,920.0 885.0,887.5 841.2,890.0" fill="#ffffff" stroke="#14181c" stroke-width="0.5" stroke-linejoin="round" />
<polygon points="841.2,895.0 885.0,893.8 885.0,901.2 867.5,904.5 841.2,902.0" fill="#ffffff" stroke="#14181c" stroke-width="0.5" stroke-linejoin="round" />
<polygon points="866.2,905.0 890.0,902.5 897.5,921.2 876.2,923.0" fill="#ffffff" stroke="#14181c" stroke-width="0.5" stroke-linejoin="round" />
<polygon points="876.2,922.5 905.0,920.0 922.5,953.8 930.0,958.8 875.0,961.2 877.0,930.0" fill="#7f8a97" stroke="#14181c" stroke-width="0.6" stroke-linejoin="round" />
<polygon points="876.2,922.5 905.0,920.0 913.8,937.5 877.0,940.5" fill="#94a1b2" stroke="#14181c" stroke-width="0.6" stroke-linejoin="round" />
<polygon points="875.0,962.5 893.8,961.2 893.8,971.2 875.0,973.0" fill="#ffffff" stroke="#14181c" stroke-width="0.5" stroke-linejoin="round" />
<polygon points="893.8,961.2 927.5,959.5 928.8,982.5 896.2,985.0 891.2,975.0" fill="#e9edfb" stroke="#14181c" stroke-width="0.5" stroke-linejoin="round" />
<polygon points="925.5,915.5 926.2,902.5 931.2,893.8 936.2,900.0 942.5,916.2" fill="#8a95a4" stroke="#14181c" stroke-width="0.7" stroke-linejoin="round" />
<polygon points="925.0,916.2 963.8,922.5 963.8,957.5 922.5,955.0" fill="#0050dc" stroke="#14181c" stroke-width="0.7" stroke-linejoin="round" />
<ellipse cx="932.5" cy="945.0" rx="5.5" ry="27" fill="none" stroke="#2fbff0" stroke-width="0.8" />
<ellipse cx="932.5" cy="945.0" rx="3.5" ry="21" fill="none" stroke="#2fbff0" stroke-width="0.8" /></g></svg>
<div class="abs" style="left:826px;top:172px;width:552px;height:32px;background:#f3f6f8;border:1px solid #aeb6b9"></div>
<div class="abs" style="left:1013px;top:177px;width:23px;height:23px;background:#dfe3e4;border:1px solid #b3babc"></div><svg style="left:0;top:0" width="1760" height="220" viewBox="0 0 1760 220">
<g transform="translate(840,185) scale(1.35)"><path d="M-5 0C-3-3.500 3-3.500 5 0C3 3.500-3 3.500-5 0z" fill="#2f3638"/><circle r="1.900" fill="#f3f6f8"/><circle r="1" fill="#2f3638"/></g><g transform="translate(845,193) scale(0.62)"><use href="#cam"/></g><path d="M847.500 177.500h4.500v4.500z" fill="#1e88d8"/>
<g transform="translate(866,185) scale(1.35)"><path d="M-5 0C-3-3.500 3-3.500 5 0C3 3.500-3 3.500-5 0z" fill="#b4bbbd"/><circle r="1.900" fill="#f3f6f8"/><circle r="1" fill="#b4bbbd"/></g><circle cx="871" cy="192" r="4.500" fill="#e4e8e9" stroke="#b4bbbd"/><path d="M871 189v3h2.500" stroke="#b4bbbd" fill="none"/><path d="M873.500 177.500h4.500v4.500z" fill="#1e88d8"/>
<rect x="886.500" y="181.500" width="13" height="13" fill="#fbfcfc" stroke="#b7bec0"/><path d="M896.5 191.0l5 5.500" stroke="#9aa3a6" stroke-width="2.600" stroke-linecap="round"/><circle cx="893" cy="187.0" r="5.200" fill="#eef8fd" stroke="#2f9bd0" stroke-width="1.300"/>
<path d="M921.5 189.5l5 5.500" stroke="#9aa3a6" stroke-width="2.600" stroke-linecap="round"/><circle cx="918" cy="185.5" r="5.200" fill="#eef8fd" stroke="#2f9bd0" stroke-width="1.300"/><path d="M915 185.500h6M918 182.500v6" stroke="#1b67a8" stroke-width="1.800"/>
<path d="M947.5 189.5l5 5.500" stroke="#9aa3a6" stroke-width="2.600" stroke-linecap="round"/><circle cx="944" cy="185.5" r="5.200" fill="#eef8fd" stroke="#2f9bd0" stroke-width="1.300"/><path d="M941 185.500h6" stroke="#1b67a8" stroke-width="1.800"/>
<rect x="964.500" y="181.500" width="14" height="13" fill="#d8effa" stroke="#7fbfe0"/><path d="M965 194l13-12.500v12.500z" fill="#fff"/><path d="M966.500 194.500l12-12" stroke="#1b67a8" stroke-width="1.800"/>
<path d="M990.500 184l3.500-3.500h10.500l-3.500 3.500z" fill="#a8e2f7" stroke="#1f6f9c"/><path d="M1001 184l3.500-3.500v10.500l-3.500 3.500z" fill="#6fb2d2" stroke="#1f6f9c"/><rect x="990.500" y="184" width="10.500" height="10.500" fill="#fff" stroke="#1f6f9c" stroke-width="1.200"/><path d="M1006 193.500v2.500h-2.500z" fill="#3a4143"/>
<path d="M1016.500 181.500h5c5 0 8 4 8 10" fill="none" stroke="#4a5254" stroke-width="1.300"/><rect x="1016.500" y="181.500" width="14" height="14" fill="none" stroke="#c3c9cb" stroke-width=".6"/><g transform="translate(1029,194) scale(0.9)"><path d="M-5 0C-3-3.500 3-3.500 5 0C3 3.500-3 3.500-5 0z" fill="#2f3638"/><circle r="1.900" fill="#f3f6f8"/><circle r="1" fill="#2f3638"/></g><path d="M1031 177.500h4.500v4.500z" fill="#1e88d8"/>
<path d="M1042.500 188l3.500-6.500h8l3.500 6.500-3.500 6.500h-8z" fill="#d8f1fb" stroke="#4aa8d8"/><path d="M1054 181.500l3.500 6.500-3.500 6.500-3-6.500z" fill="#6aaed0" stroke="#3d8fc0"/><rect x="1053.500" y="190.500" width="5" height="6" fill="#f4f6f7" stroke="#8d9699" stroke-width=".8"/><path d="M1060.500 194v2.500h-2.500z" fill="#3a4143"/>
<rect x="1068.500" y="181.500" width="12" height="12.500" fill="#fcfdfd" stroke="#a8b0b2"/><path d="M1068.500 185h12M1068.500 188h12M1068.500 191h12M1072 183v11" stroke="#a8b0b2" stroke-width=".8"/><g transform="translate(1079.5,193.5) scale(0.62)"><use href="#cam"/></g>
<path d="M1094.3 180.8l3.4 3.4M1097.7 180.8l-3.4 3.4" stroke="#8a6420" stroke-width="1.100"/><path d="M1103.3 184.8l3.4 3.4M1106.7 184.8l-3.4 3.4" stroke="#8a6420" stroke-width="1.100"/><path d="M1100 181l-3.500 13" stroke="#8a6420" stroke-width="1.100" stroke-dasharray="3 1.500"/><path d="M1103 190v4.500h4.500M1103 194.500l-2.500 2" stroke="#8a6420" stroke-width="1" fill="none"/><path d="M1112 194v2.500h-2.500z" fill="#3a4143"/>
<rect x="1120.500" y="181.500" width="9" height="5.500" fill="#fdf3d9" stroke="#a8b0b2"/><path d="M1130 184.500h5l-1 4" fill="none" stroke="#3a4143" stroke-width="1.100"/><path d="M1131.500 188l4-.3-2 2.800z" fill="#3a4143"/><g transform="translate(1131.5,194) scale(0.85)"><path d="M-5 0C-3-3.500 3-3.500 5 0C3 3.500-3 3.500-5 0z" fill="#2f3638"/><circle r="1.900" fill="#f3f6f8"/><circle r="1" fill="#2f3638"/></g>
<path d="M1147.500 184.500l3-2h10v9.500l-3 2.500c-3.500-2-6.500-2-10 0z" fill="#bfe5f7" stroke="#2f87c4"/><path d="M1147.500 184.500c3.500-1.500 7-1.500 10 0v10M1157.500 184.500l3-2" fill="none" stroke="#2f87c4"/><path d="M1157.500 184.700l3-2v9.300l-3 2.300z" fill="#6fb9e0"/>
<path d="M1172 193l2.500-3h10.500l-2.500 3z" fill="#e2f8dc" stroke="#5fb04f" stroke-width=".8"/><path d="M1172 193h10.500v3h-10.500z" fill="#c8f0c0" stroke="#5fb04f" stroke-width=".8"/><path d="M1182.500 193l2.500-3v3l-2.500 3z" fill="#9ed890" stroke="#5fb04f" stroke-width=".8"/><path d="M1176 184v7h6v-7" fill="none" stroke="#1f6fb0" stroke-width="1.400"/><path d="M1173.500 184.500l2.500-4 2.500 4zM1179.500 184.500l2.500-4 2.500 4z" fill="#2f9bdc" stroke="#1f6fb0" stroke-width=".7"/>
<path d="M1201.500 183l4.500 5h4.500M1206 188l-4.500 5" stroke="#3a4143" stroke-width="1.100" fill="none"/><circle cx="1201.500" cy="183" r="2.300" fill="#6aa86a"/><circle cx="1210.500" cy="188" r="2.300" fill="#e07070"/><circle cx="1201.500" cy="193.500" r="2.300" fill="#4a94c4"/>
<defs><radialGradient id="gs2" cx=".35" cy=".3" r=".8"><stop offset="0" stop-color="#fff"/><stop offset=".5" stop-color="#9a9a9a"/><stop offset="1" stop-color="#3a3a3a"/></radialGradient></defs><circle cx="1234.500" cy="185.500" r="4.500" fill="url(#gs2)"/><circle cx="1229.500" cy="190.500" r="5" fill="url(#gs2)"/><path d="M1240 194v2.500h-2.500z" fill="#3a4143"/>
<rect x="1250" y="181" width="13" height="2.200" fill="#4a5254"/><rect x="1250.500" y="184.500" width="12" height="3" fill="#2f87c4"/><rect x="1250.500" y="188.500" width="12" height="3" fill="#2f87c4"/><rect x="1253" y="186" width="7" height="3.500" fill="#d7edf9"/><g transform="translate(1261.5,194) scale(0.85)"><path d="M-5 0C-3-3.500 3-3.500 5 0C3 3.500-3 3.500-5 0z" fill="#2f3638"/><circle r="1.900" fill="#f3f6f8"/><circle r="1" fill="#2f3638"/></g>
<path d="M1277.500 184.500h11v8h-11c2.500-2.500 2.500-5.500 0-8z" fill="#d5d8d9"/>
<path d="M1309.500 181l7.500 13h-15z" fill="#eceeef" stroke="#c3c9cb" stroke-width="1.500" stroke-linejoin="round"/><path d="M1314 190v5l3.500-2.500z" fill="#d5d8d9" stroke="#c3c9cb" stroke-width=".8"/>
<rect x="1330.500" y="182" width="3.500" height="11.500" fill="#8d9699"/><rect x="1337" y="182" width="3.500" height="11.500" fill="#8d9699"/>
<path d="M1354 184.500l3.500-3h11l-14.500 13.500z" fill="url(#gcy)" stroke="#8ecbe8" stroke-width=".6"/><path d="M1368.500 183v9l-3.500 3h-9" fill="none" stroke="#a8b0b2" stroke-width="1" stroke-dasharray="1 1.200"/><path d="M1353.500 195.500l15.500-15" stroke="#1f6fb0" stroke-width="1.500"/><path d="M1372 194v2.500h-2.500z" fill="#3a4143"/>
</svg><div class="t" style="left:294.0px;top:863.5px;font-size:13px;letter-spacing:0.035px;color:#8b95a5;">Explode State:MOLD_OPEN</div>

<div class="abs" style="left:6px;top:1022px;width:22px;height:14px;background:#dfe3e4;border:1px solid #aeb6b9"></div>
<div class="abs" style="left:8px;top:1025px;width:17px;height:3px;background:#fff;border-top:1px solid #6b7375;border-bottom:1px solid #6b7375"></div>
<div class="abs" style="left:61px;top:1026px;width:15px;height:8px;background:#fff;border:1px solid #2f87c4"></div>
<div class="abs" style="left:89px;top:1022px;width:1px;height:16px;background:#b3bcbe"></div>
<div class="abs" style="left:1512px;top:1016px;width:1px;height:16px;background:#b3bcbe"></div>
<div class="abs" style="left:1537px;top:1016px;width:1px;height:16px;background:#b3bcbe"></div>
<div class="abs" style="left:1580px;top:1016px;width:1px;height:16px;background:#b3bcbe"></div>
<div class="abs" style="left:96px;top:1026px;width:5px;height:5px;border-radius:3px;background:#1b5a8c"></div>
<div class="t" style="left:106.0px;top:1023.1px;font-size:12.5px;letter-spacing:-0.624px;">20:57 Assembly components have been successfully exploded.</div>

<div class="abs" style="left:1737px;top:1020px;width:30px;height:14px;background:#fbfcfc;border:1px solid #b3bcbe"></div>
<div class="t" style="left:1744.0px;top:1023.9px;font-size:12.5px;">Ge</div>
<svg style="left:0;top:1012px" width="1760" height="19" viewBox="0 1012 1760 19"><path d="M37 1031c0-5 6-7.500 13-6.500M40 1031c1-3 5-5 10-4.500" fill="none" stroke="#2f87c4" stroke-width="1.500"/><path d="M39 1029c2-3 6-4.500 11-4" fill="none" stroke="#7d8689" stroke-width="1"/><path d="M1521 1030l3-3.500 2 1.500M1527 1024l3 2.500-3 3.500" fill="none" stroke="#1b67a8" stroke-width="1.800"/><path d="M1525 1023.500l3.500 2-3.500 2z" fill="#1b67a8"/><path d="M1545.500 1031l1.500-6.500h3.500l1 4h1l1-4h3.500l1.500 6.500z" fill="#4a4f52"/><rect x="1547" y="1022.500" width="3" height="2.500" fill="#6b7375"/><rect x="1554" y="1022.500" width="3" height="2.500" fill="#6b7375"/><path d="M1566.500 1027.500h7l-3.500 4z" fill="#555d5f"/><rect x="1587.500" y="1026.500" width="14" height="8" fill="none" stroke="#2f3638" stroke-width="1" stroke-dasharray="3 2"/><path d="M1610 1030.500h6" stroke="#4a5254" stroke-width="1.200"/><rect x="1627.500" y="1024" width="15.500" height="9" fill="#e4e8e9" stroke="#a8b0b2" stroke-width="1" stroke-dasharray="2 1.500"/><path d="M1630.500 1029.500c2.500-3 6.500-3 9 0" fill="none" stroke="#a8b0b2" stroke-width="1.200"/><circle cx="1635" cy="1029.500" r="1.500" fill="#a8b0b2"/></svg>
</body></html>
